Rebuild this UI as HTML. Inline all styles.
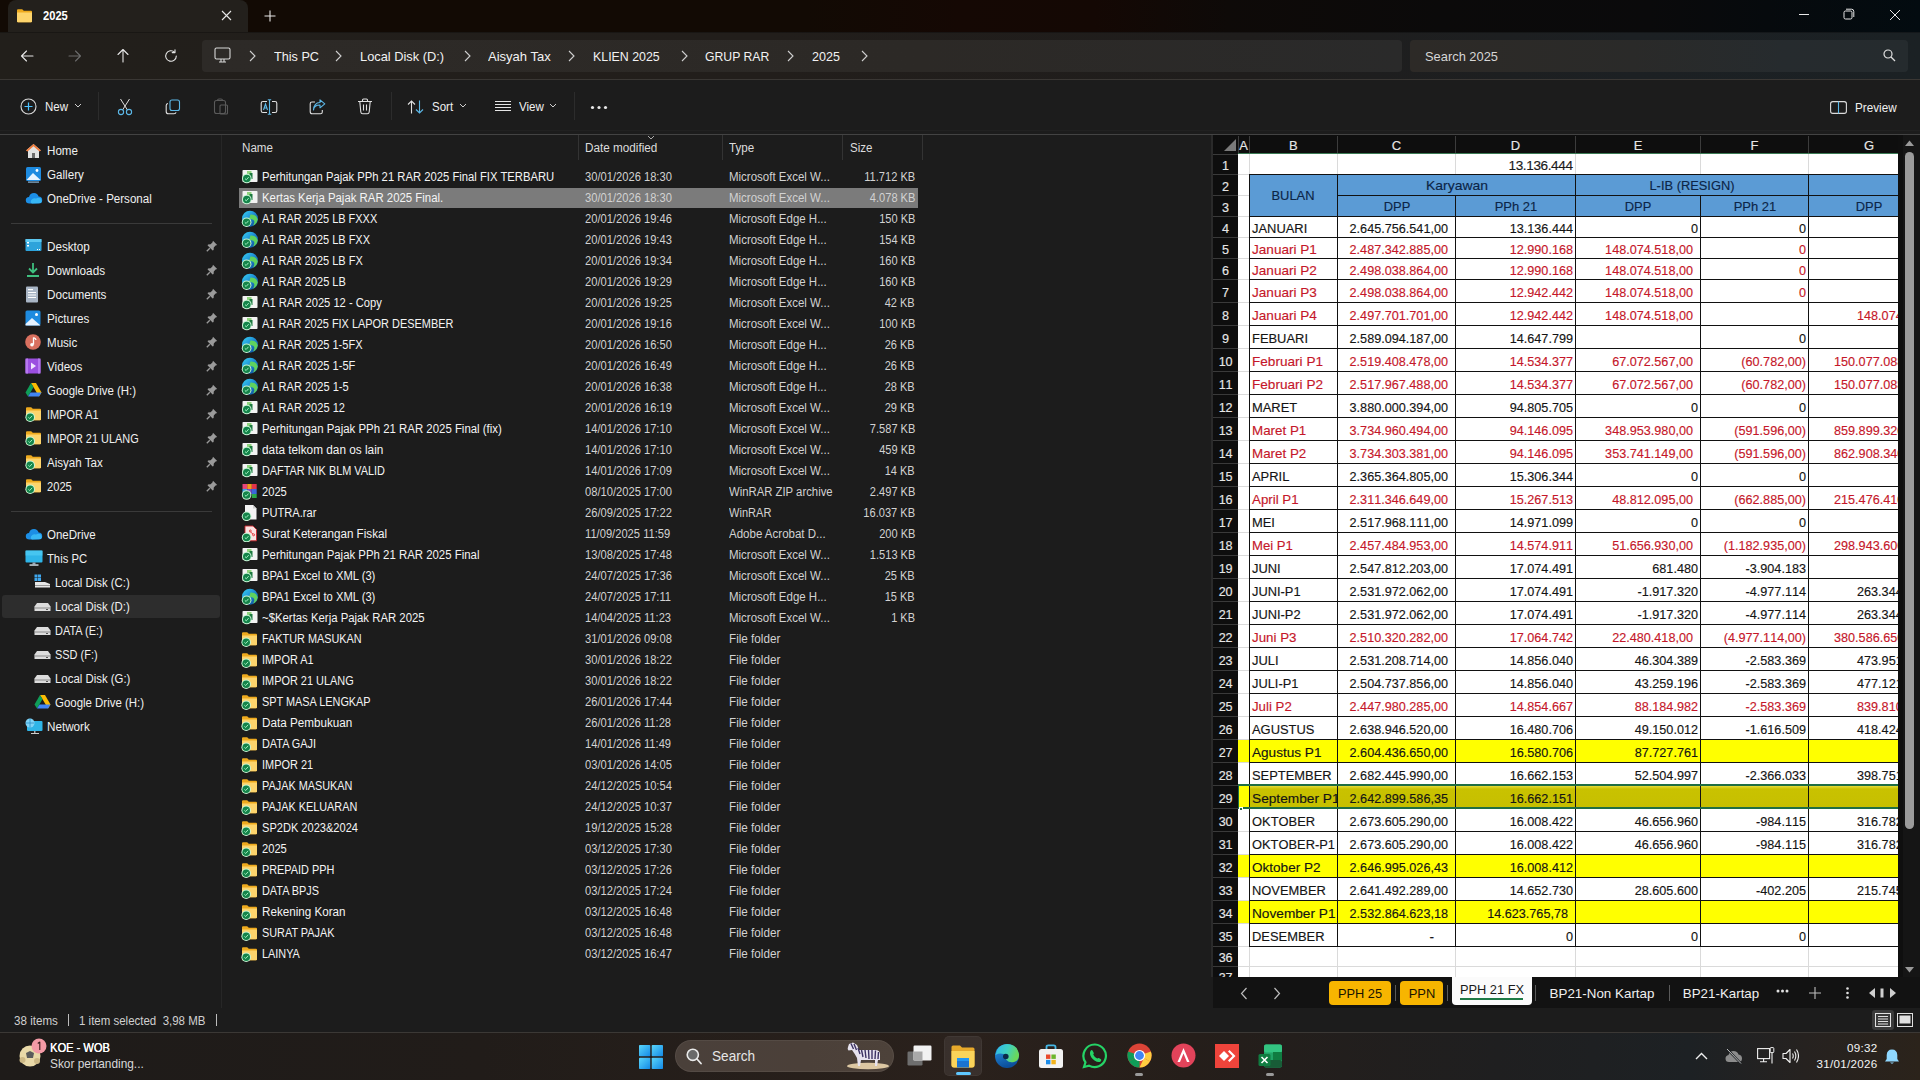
<!DOCTYPE html><html><head><meta charset="utf-8"><title>2025 - File Explorer</title><style>
*{box-sizing:border-box}
html,body{margin:0;padding:0}
body{width:1920px;height:1080px;overflow:hidden;position:relative;background:#1c1c1c;font-family:"Liberation Sans",sans-serif;color:#fff}
.a{position:absolute;white-space:nowrap}
.t12{font-size:11.6px;letter-spacing:-0.15px}
.t14{font-size:13.4px;letter-spacing:-0.2px}
.ln{position:absolute;background:#2f2f2f}
.sh .a{-webkit-text-stroke:0.15px currentColor;font-kerning:none}
</style></head><body><div class="a" style="left:0px;top:0px;width:1920px;height:32px;background:linear-gradient(90deg,#120a04 0%,#120a04 42%,#150804 50%,#140804 57%,#0e0a08 64%,#0b0a0a 75%,#0a0a0b 86%,#060a0d 92%,#030b10 100%);"></div><div class="a" style="left:8px;top:0px;width:240px;height:32px;background:#23201c;border-radius:8px 8px 0 0"></div><svg style="position:absolute;left:16px;top:8px" width="17" height="16" viewBox="0 0 17 16" ><path d="M1 2.2 Q1 1.2 2 1.2 H6.2 L7.8 2.8 H15 Q16 2.8 16 3.8 V13.2 Q16 14.2 15 14.2 H2 Q1 14.2 1 13.2 Z" fill="#eeaa1e"/><path d="M1 4.6 H16 V13.2 Q16 14.2 15 14.2 H2 Q1 14.2 1 13.2 Z" fill="#fdd46c"/></svg><div class="a" style="left:43px;top:10.34px;font-size:12px;line-height:12px;color:#ffffff;transform:scaleX(0.9300);transform-origin:left center;font-weight:bold;">2025</div><svg style="position:absolute;left:221px;top:10px" width="11" height="11" viewBox="0 0 11 11" ><path d="M1 1 L10 10 M10 1 L1 10" stroke="#e8e8e8" stroke-width="1.1"/></svg><svg style="position:absolute;left:264px;top:10px" width="12" height="12" viewBox="0 0 12 12" ><path d="M6 0.5 V11.5 M0.5 6 H11.5" stroke="#e8e8e8" stroke-width="1.1"/></svg><div class="a" style="left:1799px;top:14px;width:10px;height:1px;background:#e8e8e8;"></div><svg style="position:absolute;left:1843px;top:8px" width="12" height="12" viewBox="0 0 12 12" ><rect x="1" y="3" width="8" height="8" rx="1.5" fill="none" stroke="#e8e8e8" stroke-width="1"/><path d="M3 1.2 H8.5 Q10.8 1.2 10.8 3.5 V9" fill="none" stroke="#e8e8e8" stroke-width="1"/></svg><svg style="position:absolute;left:1889px;top:9px" width="12" height="12" viewBox="0 0 12 12" ><path d="M1 1 L11 11 M11 1 L1 11" stroke="#e8e8e8" stroke-width="1"/></svg><div class="a" style="left:0px;top:32px;width:1920px;height:47px;background:linear-gradient(90deg,#221f1b 0%,#221e1b 40%,#1f1d1c 65%,#1c2023 85%,#1b2124 100%);"></div><div class="a" style="left:0px;top:32px;width:1920px;height:1px;background:rgba(0,0,0,0.25);"></div><div class="a" style="left:0px;top:79px;width:1920px;height:1px;background:#3a3734;"></div><svg style="position:absolute;left:20px;top:49px" width="14" height="14" viewBox="0 0 14 14" ><path d="M13 7 H1.5 M6.5 2 L1.5 7 L6.5 12" fill="none" stroke="#e6e6e6" stroke-width="1.1" stroke-linecap="round" stroke-linejoin="round"/></svg><svg style="position:absolute;left:68px;top:49px" width="14" height="14" viewBox="0 0 14 14" ><path d="M1 7 H12.5 M7.5 2 L12.5 7 L7.5 12" fill="none" stroke="#6b6b6b" stroke-width="1.1" stroke-linecap="round" stroke-linejoin="round"/></svg><svg style="position:absolute;left:116px;top:48px" width="14" height="15" viewBox="0 0 14 15" ><path d="M7 14 V1.5 M2 6.5 L7 1.5 L12 6.5" fill="none" stroke="#e6e6e6" stroke-width="1.1" stroke-linecap="round" stroke-linejoin="round"/></svg><svg style="position:absolute;left:164px;top:49px" width="14" height="14" viewBox="0 0 14 14" ><path d="M12.3 7 A5.3 5.3 0 1 1 10.6 3.1" fill="none" stroke="#e6e6e6" stroke-width="1.1" stroke-linecap="round" stroke-linejoin="round"/><path d="M11 0.8 V3.6 H8.2" fill="none" stroke="#e6e6e6" stroke-width="1.1" stroke-linecap="round" stroke-linejoin="round"/></svg><div class="a" style="left:202px;top:40px;width:1200px;height:32px;background:linear-gradient(90deg,#2d2a27 0%,#2c2926 60%,#2a2a2a 100%);border-radius:4px"></div><svg style="position:absolute;left:214px;top:47px" width="17" height="16" viewBox="0 0 17 16" ><rect x="1" y="1" width="15" height="11" rx="1.5" fill="none" stroke="#d8d8d8" stroke-width="1.1"/><path d="M5 15 H12 M7 12 V14.5 M10 12 V14.5" stroke="#d8d8d8" stroke-width="1.1"/></svg><svg style="position:absolute;left:249px;top:50px" width="7" height="12" viewBox="0 0 7 12" ><path d="M1 1 L6 6 L1 11" fill="none" stroke="#d0d0d0" stroke-width="1.1"/></svg><div class="a" style="left:274px;top:49.57px;font-size:13.5px;line-height:13.5px;color:#f2f2f2;transform:scaleX(0.9375);transform-origin:left center;">This PC</div><svg style="position:absolute;left:335px;top:50px" width="7" height="12" viewBox="0 0 7 12" ><path d="M1 1 L6 6 L1 11" fill="none" stroke="#d0d0d0" stroke-width="1.1"/></svg><div class="a" style="left:360px;top:49.57px;font-size:13.5px;line-height:13.5px;color:#f2f2f2;transform:scaleX(0.9503);transform-origin:left center;">Local Disk (D:)</div><svg style="position:absolute;left:464px;top:50px" width="7" height="12" viewBox="0 0 7 12" ><path d="M1 1 L6 6 L1 11" fill="none" stroke="#d0d0d0" stroke-width="1.1"/></svg><div class="a" style="left:488px;top:49.57px;font-size:13.5px;line-height:13.5px;color:#f2f2f2;transform:scaleX(0.9647);transform-origin:left center;">Aisyah Tax</div><svg style="position:absolute;left:568px;top:50px" width="7" height="12" viewBox="0 0 7 12" ><path d="M1 1 L6 6 L1 11" fill="none" stroke="#d0d0d0" stroke-width="1.1"/></svg><div class="a" style="left:593px;top:49.57px;font-size:13.5px;line-height:13.5px;color:#f2f2f2;transform:scaleX(0.9166);transform-origin:left center;">KLIEN 2025</div><svg style="position:absolute;left:681px;top:50px" width="7" height="12" viewBox="0 0 7 12" ><path d="M1 1 L6 6 L1 11" fill="none" stroke="#d0d0d0" stroke-width="1.1"/></svg><div class="a" style="left:705px;top:49.57px;font-size:13.5px;line-height:13.5px;color:#f2f2f2;transform:scaleX(0.9063);transform-origin:left center;">GRUP RAR</div><svg style="position:absolute;left:787px;top:50px" width="7" height="12" viewBox="0 0 7 12" ><path d="M1 1 L6 6 L1 11" fill="none" stroke="#d0d0d0" stroke-width="1.1"/></svg><div class="a" style="left:812px;top:49.57px;font-size:13.5px;line-height:13.5px;color:#f2f2f2;transform:scaleX(0.9300);transform-origin:left center;">2025</div><svg style="position:absolute;left:861px;top:50px" width="7" height="12" viewBox="0 0 7 12" ><path d="M1 1 L6 6 L1 11" fill="none" stroke="#d0d0d0" stroke-width="1.1"/></svg><div class="a" style="left:1410px;top:40px;width:498px;height:32px;background:linear-gradient(90deg,#2d2a27 0%,#2a2a29 45%,#262b2e 75%,#252b2e 100%);border-radius:4px"></div><div class="a" style="left:1425px;top:49.57px;font-size:13.5px;line-height:13.5px;color:#d6d6d6;transform:scaleX(0.9535);transform-origin:left center;">Search 2025</div><svg style="position:absolute;left:1883px;top:49px" width="13" height="13" viewBox="0 0 13 13" ><circle cx="5" cy="5" r="4" fill="none" stroke="#e0e0e0" stroke-width="1.2"/><path d="M8 8 L12 12" stroke="#e0e0e0" stroke-width="1.3"/></svg><div class="a" style="left:0px;top:80px;width:1920px;height:54px;background:#1c1c1c;"></div><div class="a" style="left:0px;top:134px;width:1920px;height:1px;background:#434343;"></div><div class="a" style="left:0px;top:130px;width:1920px;height:1px;background:#212121;"></div><svg style="position:absolute;left:20px;top:98px" width="17" height="17" viewBox="0 0 17 17" ><circle cx="8.5" cy="8.5" r="7.5" fill="none" stroke="#dadada" stroke-width="1.1"/><path d="M8.5 4.5 V12.5 M4.5 8.5 H12.5" stroke="#4cc2ff" stroke-width="1.2"/></svg><div class="a" style="left:45px;top:101.34px;font-size:12px;line-height:12px;color:#f0f0f0;transform:scaleX(0.9593);transform-origin:left center;">New</div><svg style="position:absolute;left:74px;top:103px" width="8" height="5" viewBox="0 0 8 5" ><path d="M1 1 L4 4 L7 1" fill="none" stroke="#cfcfcf" stroke-width="1"/></svg><div class="a" style="left:98px;top:92px;width:1px;height:28px;background:#2c2c2c;"></div><svg style="position:absolute;left:117px;top:98px" width="16" height="18" viewBox="0 0 16 18" ><path d="M3.5 1 L10.5 12 M12.5 1 L5.5 12" stroke="#e0e0e0" stroke-width="1"/><circle cx="4" cy="14" r="2.6" fill="none" stroke="#5cb8e8" stroke-width="1.1"/><circle cx="12" cy="14" r="2.6" fill="none" stroke="#5cb8e8" stroke-width="1.1"/></svg><svg style="position:absolute;left:165px;top:99px" width="16" height="16" viewBox="0 0 16 16" ><rect x="5" y="1" width="9.5" height="10.5" rx="2" fill="none" stroke="#5cb8e8" stroke-width="1.1"/><path d="M3 4.5 Q1.2 4.8 1.2 6.5 V12.5 Q1.2 14.8 3.5 14.8 H9 Q10.8 14.8 11 13.2" fill="none" stroke="#e0e0e0" stroke-width="1.1"/></svg><svg style="position:absolute;left:213px;top:98px" width="16" height="17" viewBox="0 0 16 17" ><rect x="1.5" y="2.5" width="11" height="13" rx="2" fill="none" stroke="#5a5a5a" stroke-width="1.1"/><rect x="7" y="7" width="7.5" height="9" rx="1" fill="none" stroke="#5a5a5a" stroke-width="1.1"/><path d="M4.5 2.5 Q4.5 1 6 1 H8 Q9.5 1 9.5 2.5" fill="none" stroke="#5a5a5a" stroke-width="1.1"/></svg><svg style="position:absolute;left:260px;top:99px" width="18" height="16" viewBox="0 0 18 16" ><path d="M7 2.5 H3 Q1.2 2.5 1.2 4.3 V11.7 Q1.2 13.5 3 13.5 H7 M12 2.5 H15 Q16.8 2.5 16.8 4.3 V11.7 Q16.8 13.5 15 13.5 H12" fill="none" stroke="#e0e0e0" stroke-width="1.1"/><path d="M9.5 0.8 V15.2 M7.8 0.8 H11.2 M7.8 15.2 H11.2" stroke="#5cb8e8" stroke-width="1.1"/><path d="M3.5 11 L5.5 5 L7.5 11 M4.2 9 H6.8" fill="none" stroke="#5cb8e8" stroke-width="1.1"/></svg><svg style="position:absolute;left:309px;top:99px" width="17" height="16" viewBox="0 0 17 16" ><path d="M6 3 H3 Q1.2 3 1.2 4.8 V12.8 Q1.2 14.8 3.2 14.8 H11.5 Q13.3 14.8 13.3 13 V11" fill="none" stroke="#e0e0e0" stroke-width="1.1"/><path d="M4.5 11 Q5 6 11 6 V8.8 L15.8 4.8 L11 0.8 V3.5 Q4.8 3.8 4.5 11Z" fill="none" stroke="#5cb8e8" stroke-width="1.1" stroke-linejoin="round"/></svg><svg style="position:absolute;left:357px;top:98px" width="16" height="17" viewBox="0 0 16 17" ><path d="M1 3.5 H15 M5.5 3.5 V2 Q5.5 1 6.5 1 H9.5 Q10.5 1 10.5 2 V3.5 M2.8 3.5 L3.8 14 Q4 15.8 5.8 15.8 H10.2 Q12 15.8 12.2 14 L13.2 3.5 M6.5 6.5 V12.5 M9.5 6.5 V12.5" fill="none" stroke="#e0e0e0" stroke-width="1.1"/></svg><div class="a" style="left:391px;top:92px;width:1px;height:28px;background:#2c2c2c;"></div><svg style="position:absolute;left:407px;top:100px" width="18" height="14" viewBox="0 0 18 14" ><path d="M4.5 13.5 V1 M1 4.5 L4.5 1 L8 4.5" fill="none" stroke="#e0e0e0" stroke-width="1.1"/><path d="M12.5 0.5 V13 M9 9.5 L12.5 13 L16 9.5" fill="none" stroke="#5cb8e8" stroke-width="1.1"/></svg><div class="a" style="left:432px;top:101.34px;font-size:12px;line-height:12px;color:#f0f0f0;transform:scaleX(0.9591);transform-origin:left center;">Sort</div><svg style="position:absolute;left:459px;top:103px" width="8" height="5" viewBox="0 0 8 5" ><path d="M1 1 L4 4 L7 1" fill="none" stroke="#cfcfcf" stroke-width="1"/></svg><svg style="position:absolute;left:495px;top:101px" width="16" height="11" viewBox="0 0 16 11" ><path d="M0 0.5 H16 M0 3.5 H16 M0 6.5 H16 M0 9.5 H16" stroke="#e6e6e6" stroke-width="1"/></svg><div class="a" style="left:519px;top:101.34px;font-size:12px;line-height:12px;color:#f0f0f0;transform:scaleX(0.9638);transform-origin:left center;">View</div><svg style="position:absolute;left:549px;top:103px" width="8" height="5" viewBox="0 0 8 5" ><path d="M1 1 L4 4 L7 1" fill="none" stroke="#cfcfcf" stroke-width="1"/></svg><div class="a" style="left:574px;top:92px;width:1px;height:28px;background:#2c2c2c;"></div><svg style="position:absolute;left:590px;top:105px" width="18" height="5" viewBox="0 0 18 5" ><circle cx="2.5" cy="2.5" r="1.6" fill="#e8e8e8"/><circle cx="9" cy="2.5" r="1.6" fill="#e8e8e8"/><circle cx="15.5" cy="2.5" r="1.6" fill="#e8e8e8"/></svg><svg style="position:absolute;left:1830px;top:101px" width="17" height="13" viewBox="0 0 17 13" ><rect x="0.6" y="0.6" width="15.8" height="11.8" rx="2.2" fill="none" stroke="#dcdcdc" stroke-width="1.1"/><path d="M8.5 0.6 V12.4" stroke="#5cb8e8" stroke-width="1.1"/></svg><div class="a" style="left:1855px;top:101.84px;font-size:12px;line-height:12px;color:#f0f0f0;transform:scaleX(0.9741);transform-origin:left center;">Preview</div><div class="a" style="left:0px;top:135px;width:222px;height:873px;background:#1c1c1c;"></div><div class="a" style="left:221px;top:135px;width:1px;height:873px;background:#272727;"></div><div class="a" style="left:2px;top:595px;width:218px;height:23px;background:#2d2d2d;border-radius:3px"></div><div class="a" style="left:11px;top:223px;width:201px;height:1px;background:#3a3a3a;"></div><div class="a" style="left:11px;top:511px;width:201px;height:1px;background:#3a3a3a;"></div><svg style="position:absolute;left:25px;top:143px" width="17" height="16" viewBox="0 0 17 16" ><path d="M8.5 1 L16 7.5 H14 V15 H3 V7.5 H1 Z" fill="#e2e2e2"/><path d="M8.5 1 L16 7.5 L14.5 8.5 L8.5 3.2 L2.5 8.5 L1 7.5Z" fill="#f07b3a"/><rect x="7" y="10" width="3" height="5" fill="#6b6b6b"/></svg><div class="a" style="left:47px;top:145.44px;font-size:12px;line-height:12px;color:#f0f0f0;transform:scaleX(0.9670);transform-origin:left center;">Home</div><svg style="position:absolute;left:25px;top:166px" width="17" height="17" viewBox="0 0 17 17" ><rect x="1" y="1" width="15" height="14" rx="1.5" fill="#1e8be0"/><path d="M1.5 14 L8 7 L15.5 14Z" fill="#e8f4ff"/><circle cx="12" cy="4.5" r="1.4" fill="#fff"/><rect x="3" y="15.5" width="11" height="1.2" fill="#8ab6d8"/></svg><div class="a" style="left:47px;top:169.44px;font-size:12px;line-height:12px;color:#f0f0f0;transform:scaleX(0.9691);transform-origin:left center;">Gallery</div><svg style="position:absolute;left:25px;top:191px" width="18" height="14" viewBox="0 0 18 14" ><path d="M4.5 12.5 Q0.8 12.5 0.8 9.2 Q0.8 6.2 4 6 Q5 2 9 2 Q12.6 2 13.6 5.6 Q17.2 5.8 17.2 9.2 Q17.2 12.5 13.8 12.5Z" fill="#1c8fe6"/><path d="M7 12.5 Q5 12 6.3 9 Q8 6.5 11 7.5 Q13.6 6 15.8 7.5 Q17.5 9.5 16 12 Z" fill="#37b7f5"/></svg><div class="a" style="left:47px;top:193.44px;font-size:12px;line-height:12px;color:#f0f0f0;transform:scaleX(0.9638);transform-origin:left center;">OneDrive - Personal</div><svg style="position:absolute;left:25px;top:238px" width="17" height="14" viewBox="0 0 17 14" ><rect x="0.5" y="1" width="16" height="12" rx="1" fill="#2ea3db"/><rect x="0.5" y="1" width="16" height="3" fill="#5cc7f0"/><rect x="2" y="4" width="2" height="1.5" fill="#fff"/><rect x="2" y="7" width="2" height="1.5" fill="#fff"/><rect x="12" y="11" width="1" height="1" fill="#fff"/><rect x="14" y="11" width="1" height="1" fill="#fff"/></svg><div class="a" style="left:47px;top:241.44px;font-size:12px;line-height:12px;color:#f0f0f0;transform:scaleX(0.9733);transform-origin:left center;">Desktop</div><svg style="position:absolute;left:206px;top:240px" width="12" height="12" viewBox="0 0 12 12" ><path d="M7 0.8 L11.2 5 L9.6 5.6 L7.8 7.4 L7.6 10 L6.6 10.4 L1.6 5.4 L2 4.4 L4.6 4.2 L6.4 2.4 Z" fill="#9a9a9a"/><path d="M3.8 8.2 L0.8 11.2" stroke="#9a9a9a" stroke-width="1.3"/></svg><svg style="position:absolute;left:25px;top:262px" width="16" height="16" viewBox="0 0 16 16" ><path d="M8 1 V10 M4 6.5 L8 10.5 L12 6.5" fill="none" stroke="#3fbf7f" stroke-width="1.8"/><rect x="2" y="13" width="12" height="2" fill="#3fbf7f"/></svg><div class="a" style="left:47px;top:265.44px;font-size:12px;line-height:12px;color:#f0f0f0;transform:scaleX(0.9776);transform-origin:left center;">Downloads</div><svg style="position:absolute;left:206px;top:264px" width="12" height="12" viewBox="0 0 12 12" ><path d="M7 0.8 L11.2 5 L9.6 5.6 L7.8 7.4 L7.6 10 L6.6 10.4 L1.6 5.4 L2 4.4 L4.6 4.2 L6.4 2.4 Z" fill="#9a9a9a"/><path d="M3.8 8.2 L0.8 11.2" stroke="#9a9a9a" stroke-width="1.3"/></svg><svg style="position:absolute;left:25px;top:286px" width="14" height="17" viewBox="0 0 14 17" ><rect x="1" y="0.5" width="12" height="16" rx="1" fill="#a9b6c6"/><rect x="3" y="3" width="5" height="1.2" fill="#fff"/><rect x="3" y="6" width="8" height="1" fill="#fff"/><rect x="3" y="8.5" width="8" height="1" fill="#fff"/><rect x="3" y="11" width="8" height="1" fill="#fff"/></svg><div class="a" style="left:47px;top:289.44px;font-size:12px;line-height:12px;color:#f0f0f0;transform:scaleX(0.9779);transform-origin:left center;">Documents</div><svg style="position:absolute;left:206px;top:288px" width="12" height="12" viewBox="0 0 12 12" ><path d="M7 0.8 L11.2 5 L9.6 5.6 L7.8 7.4 L7.6 10 L6.6 10.4 L1.6 5.4 L2 4.4 L4.6 4.2 L6.4 2.4 Z" fill="#9a9a9a"/><path d="M3.8 8.2 L0.8 11.2" stroke="#9a9a9a" stroke-width="1.3"/></svg><svg style="position:absolute;left:25px;top:310px" width="16" height="16" viewBox="0 0 16 16" ><rect x="0.5" y="0.5" width="15" height="15" rx="1.5" fill="#1e8be0"/><path d="M0.5 14 L7 8 L15.5 15.5 H0.5Z" fill="#e6f2ff"/><circle cx="11.5" cy="4.5" r="1.5" fill="#fff"/></svg><div class="a" style="left:47px;top:313.44px;font-size:12px;line-height:12px;color:#f0f0f0;transform:scaleX(0.9743);transform-origin:left center;">Pictures</div><svg style="position:absolute;left:206px;top:312px" width="12" height="12" viewBox="0 0 12 12" ><path d="M7 0.8 L11.2 5 L9.6 5.6 L7.8 7.4 L7.6 10 L6.6 10.4 L1.6 5.4 L2 4.4 L4.6 4.2 L6.4 2.4 Z" fill="#9a9a9a"/><path d="M3.8 8.2 L0.8 11.2" stroke="#9a9a9a" stroke-width="1.3"/></svg><svg style="position:absolute;left:25px;top:334px" width="16" height="16" viewBox="0 0 16 16" ><circle cx="8" cy="8" r="7.8" fill="#d9705f"/><path d="M8.5 3.5 V10.5 M8.5 3.5 Q11 4.5 11 6" stroke="#fff" stroke-width="1.3" fill="none"/><circle cx="7" cy="10.8" r="1.8" fill="#fff"/></svg><div class="a" style="left:47px;top:337.44px;font-size:12px;line-height:12px;color:#f0f0f0;transform:scaleX(0.9629);transform-origin:left center;">Music</div><svg style="position:absolute;left:206px;top:336px" width="12" height="12" viewBox="0 0 12 12" ><path d="M7 0.8 L11.2 5 L9.6 5.6 L7.8 7.4 L7.6 10 L6.6 10.4 L1.6 5.4 L2 4.4 L4.6 4.2 L6.4 2.4 Z" fill="#9a9a9a"/><path d="M3.8 8.2 L0.8 11.2" stroke="#9a9a9a" stroke-width="1.3"/></svg><svg style="position:absolute;left:25px;top:358px" width="16" height="16" viewBox="0 0 16 16" ><rect x="0.5" y="0.5" width="15" height="15" rx="1.5" fill="#9b4fe0"/><rect x="0.5" y="0.5" width="2.5" height="15" fill="#b678f0"/><rect x="13" y="0.5" width="2.5" height="15" fill="#b678f0"/><path d="M6 4.5 L11 8 L6 11.5Z" fill="#f1e4ff"/></svg><div class="a" style="left:47px;top:361.44px;font-size:12px;line-height:12px;color:#f0f0f0;transform:scaleX(0.9715);transform-origin:left center;">Videos</div><svg style="position:absolute;left:206px;top:360px" width="12" height="12" viewBox="0 0 12 12" ><path d="M7 0.8 L11.2 5 L9.6 5.6 L7.8 7.4 L7.6 10 L6.6 10.4 L1.6 5.4 L2 4.4 L4.6 4.2 L6.4 2.4 Z" fill="#9a9a9a"/><path d="M3.8 8.2 L0.8 11.2" stroke="#9a9a9a" stroke-width="1.3"/></svg><svg style="position:absolute;left:25px;top:382px" width="17" height="15" viewBox="0 0 17 15" ><path d="M6 1 H11 L16.5 10.5 L14 14.5Z" fill="#fbbc04"/><path d="M6 1 L0.5 10.5 L3 14.5 L8.5 5.2Z" fill="#0f9d58"/><path d="M3 14.5 H14 L16.5 10.5 H5.5Z" fill="#4285f4"/><path d="M11 1 L16.5 10.5 H11.2 L8.5 5.5Z" fill="#ea4335" opacity="0.0"/></svg><div class="a" style="left:47px;top:385.44px;font-size:12px;line-height:12px;color:#f0f0f0;transform:scaleX(0.9542);transform-origin:left center;">Google Drive (H:)</div><svg style="position:absolute;left:206px;top:384px" width="12" height="12" viewBox="0 0 12 12" ><path d="M7 0.8 L11.2 5 L9.6 5.6 L7.8 7.4 L7.6 10 L6.6 10.4 L1.6 5.4 L2 4.4 L4.6 4.2 L6.4 2.4 Z" fill="#9a9a9a"/><path d="M3.8 8.2 L0.8 11.2" stroke="#9a9a9a" stroke-width="1.3"/></svg><svg style="position:absolute;left:25px;top:406px" width="17" height="16" viewBox="0 0 17 16" ><path d="M1 2.2 Q1 1.2 2 1.2 H6.2 L7.8 2.8 H15 Q16 2.8 16 3.8 V13.2 Q16 14.2 15 14.2 H2 Q1 14.2 1 13.2 Z" fill="#eeaa1e"/><path d="M1 4.6 H16 V13.2 Q16 14.2 15 14.2 H2 Q1 14.2 1 13.2 Z" fill="#fdd46c"/><circle cx="5.2" cy="11.2" r="4.8" fill="#c9f5d6"/><circle cx="5.2" cy="11.2" r="3.8000000000000003" fill="#14844a"/><path d="M3.4000000000000004 11.299999999999999 L4.7 12.5 L7.1 9.799999999999999" stroke="#9ff0bd" stroke-width="1" fill="none"/></svg><div class="a" style="left:47px;top:409.44px;font-size:12px;line-height:12px;color:#f0f0f0;transform:scaleX(0.9094);transform-origin:left center;">IMPOR A1</div><svg style="position:absolute;left:206px;top:408px" width="12" height="12" viewBox="0 0 12 12" ><path d="M7 0.8 L11.2 5 L9.6 5.6 L7.8 7.4 L7.6 10 L6.6 10.4 L1.6 5.4 L2 4.4 L4.6 4.2 L6.4 2.4 Z" fill="#9a9a9a"/><path d="M3.8 8.2 L0.8 11.2" stroke="#9a9a9a" stroke-width="1.3"/></svg><svg style="position:absolute;left:25px;top:430px" width="17" height="16" viewBox="0 0 17 16" ><path d="M1 2.2 Q1 1.2 2 1.2 H6.2 L7.8 2.8 H15 Q16 2.8 16 3.8 V13.2 Q16 14.2 15 14.2 H2 Q1 14.2 1 13.2 Z" fill="#eeaa1e"/><path d="M1 4.6 H16 V13.2 Q16 14.2 15 14.2 H2 Q1 14.2 1 13.2 Z" fill="#fdd46c"/><circle cx="5.2" cy="11.2" r="4.8" fill="#c9f5d6"/><circle cx="5.2" cy="11.2" r="3.8000000000000003" fill="#14844a"/><path d="M3.4000000000000004 11.299999999999999 L4.7 12.5 L7.1 9.799999999999999" stroke="#9ff0bd" stroke-width="1" fill="none"/></svg><div class="a" style="left:47px;top:433.44px;font-size:12px;line-height:12px;color:#f0f0f0;transform:scaleX(0.9100);transform-origin:left center;">IMPOR 21 ULANG</div><svg style="position:absolute;left:206px;top:432px" width="12" height="12" viewBox="0 0 12 12" ><path d="M7 0.8 L11.2 5 L9.6 5.6 L7.8 7.4 L7.6 10 L6.6 10.4 L1.6 5.4 L2 4.4 L4.6 4.2 L6.4 2.4 Z" fill="#9a9a9a"/><path d="M3.8 8.2 L0.8 11.2" stroke="#9a9a9a" stroke-width="1.3"/></svg><svg style="position:absolute;left:25px;top:454px" width="17" height="16" viewBox="0 0 17 16" ><path d="M1 2.2 Q1 1.2 2 1.2 H6.2 L7.8 2.8 H15 Q16 2.8 16 3.8 V13.2 Q16 14.2 15 14.2 H2 Q1 14.2 1 13.2 Z" fill="#eeaa1e"/><path d="M1 4.6 H16 V13.2 Q16 14.2 15 14.2 H2 Q1 14.2 1 13.2 Z" fill="#fdd46c"/><circle cx="5.2" cy="11.2" r="4.8" fill="#c9f5d6"/><circle cx="5.2" cy="11.2" r="3.8000000000000003" fill="#14844a"/><path d="M3.4000000000000004 11.299999999999999 L4.7 12.5 L7.1 9.799999999999999" stroke="#9ff0bd" stroke-width="1" fill="none"/></svg><div class="a" style="left:47px;top:457.44px;font-size:12px;line-height:12px;color:#f0f0f0;transform:scaleX(0.9647);transform-origin:left center;">Aisyah Tax</div><svg style="position:absolute;left:206px;top:456px" width="12" height="12" viewBox="0 0 12 12" ><path d="M7 0.8 L11.2 5 L9.6 5.6 L7.8 7.4 L7.6 10 L6.6 10.4 L1.6 5.4 L2 4.4 L4.6 4.2 L6.4 2.4 Z" fill="#9a9a9a"/><path d="M3.8 8.2 L0.8 11.2" stroke="#9a9a9a" stroke-width="1.3"/></svg><svg style="position:absolute;left:25px;top:478px" width="17" height="16" viewBox="0 0 17 16" ><path d="M1 2.2 Q1 1.2 2 1.2 H6.2 L7.8 2.8 H15 Q16 2.8 16 3.8 V13.2 Q16 14.2 15 14.2 H2 Q1 14.2 1 13.2 Z" fill="#eeaa1e"/><path d="M1 4.6 H16 V13.2 Q16 14.2 15 14.2 H2 Q1 14.2 1 13.2 Z" fill="#fdd46c"/><circle cx="5.2" cy="11.2" r="4.8" fill="#c9f5d6"/><circle cx="5.2" cy="11.2" r="3.8000000000000003" fill="#14844a"/><path d="M3.4000000000000004 11.299999999999999 L4.7 12.5 L7.1 9.799999999999999" stroke="#9ff0bd" stroke-width="1" fill="none"/></svg><div class="a" style="left:47px;top:481.44px;font-size:12px;line-height:12px;color:#f0f0f0;transform:scaleX(0.9300);transform-origin:left center;">2025</div><svg style="position:absolute;left:206px;top:480px" width="12" height="12" viewBox="0 0 12 12" ><path d="M7 0.8 L11.2 5 L9.6 5.6 L7.8 7.4 L7.6 10 L6.6 10.4 L1.6 5.4 L2 4.4 L4.6 4.2 L6.4 2.4 Z" fill="#9a9a9a"/><path d="M3.8 8.2 L0.8 11.2" stroke="#9a9a9a" stroke-width="1.3"/></svg><svg style="position:absolute;left:25px;top:527px" width="18" height="14" viewBox="0 0 18 14" ><path d="M4.5 12.5 Q0.8 12.5 0.8 9.2 Q0.8 6.2 4 6 Q5 2 9 2 Q12.6 2 13.6 5.6 Q17.2 5.8 17.2 9.2 Q17.2 12.5 13.8 12.5Z" fill="#1c8fe6"/><path d="M7 12.5 Q5 12 6.3 9 Q8 6.5 11 7.5 Q13.6 6 15.8 7.5 Q17.5 9.5 16 12 Z" fill="#37b7f5"/></svg><div class="a" style="left:47px;top:529.44px;font-size:12px;line-height:12px;color:#f0f0f0;transform:scaleX(0.9598);transform-origin:left center;">OneDrive</div><svg style="position:absolute;left:25px;top:550px" width="18" height="16" viewBox="0 0 18 16" ><rect x="0.5" y="0.5" width="17" height="12" rx="1" fill="#2fb5e8"/><rect x="0.5" y="0.5" width="17" height="5" fill="#56d0f5" opacity="0.6"/><rect x="7.5" y="12.5" width="3" height="2" fill="#9ab"/><rect x="4.5" y="14.3" width="9" height="1.5" fill="#c8d4dc"/></svg><div class="a" style="left:47px;top:553.44px;font-size:12px;line-height:12px;color:#f0f0f0;transform:scaleX(0.9375);transform-origin:left center;">This PC</div><svg style="position:absolute;left:34px;top:574px" width="17" height="14" viewBox="0 0 17 14" ><rect x="0.5" y="0.5" width="3" height="3" fill="#3fa7ee"/><rect x="4" y="0.5" width="3" height="3" fill="#3fa7ee"/><rect x="0.5" y="4" width="3" height="3" fill="#3fa7ee"/><rect x="4" y="4" width="3" height="3" fill="#3fa7ee"/><path d="M1 8 H11 L16 10 V13.5 H1Z" fill="#e8e8e8"/><rect x="1" y="11" width="15" height="1" fill="#999"/></svg><div class="a" style="left:55px;top:577.44px;font-size:12px;line-height:12px;color:#f0f0f0;transform:scaleX(0.9503);transform-origin:left center;">Local Disk (C:)</div><svg style="position:absolute;left:34px;top:602px" width="17" height="10" viewBox="0 0 17 10" ><path d="M3 1 H14 L16.5 4.5 V9 H0.5 V4.5Z" fill="#dcdcdc"/><rect x="0.5" y="5.5" width="16" height="1" fill="#8a8a8a"/><rect x="12" y="7" width="2" height="1" fill="#555"/></svg><div class="a" style="left:55px;top:601.44px;font-size:12px;line-height:12px;color:#f0f0f0;transform:scaleX(0.9503);transform-origin:left center;">Local Disk (D:)</div><svg style="position:absolute;left:34px;top:626px" width="17" height="10" viewBox="0 0 17 10" ><path d="M3 1 H14 L16.5 4.5 V9 H0.5 V4.5Z" fill="#dcdcdc"/><rect x="0.5" y="5.5" width="16" height="1" fill="#8a8a8a"/><rect x="12" y="7" width="2" height="1" fill="#555"/></svg><div class="a" style="left:55px;top:625.44px;font-size:12px;line-height:12px;color:#f0f0f0;transform:scaleX(0.9117);transform-origin:left center;">DATA (E:)</div><svg style="position:absolute;left:34px;top:650px" width="17" height="10" viewBox="0 0 17 10" ><path d="M3 1 H14 L16.5 4.5 V9 H0.5 V4.5Z" fill="#dcdcdc"/><rect x="0.5" y="5.5" width="16" height="1" fill="#8a8a8a"/><rect x="12" y="7" width="2" height="1" fill="#555"/></svg><div class="a" style="left:55px;top:649.44px;font-size:12px;line-height:12px;color:#f0f0f0;transform:scaleX(0.9129);transform-origin:left center;">SSD (F:)</div><svg style="position:absolute;left:34px;top:674px" width="17" height="10" viewBox="0 0 17 10" ><path d="M3 1 H14 L16.5 4.5 V9 H0.5 V4.5Z" fill="#dcdcdc"/><rect x="0.5" y="5.5" width="16" height="1" fill="#8a8a8a"/><rect x="12" y="7" width="2" height="1" fill="#555"/></svg><div class="a" style="left:55px;top:673.44px;font-size:12px;line-height:12px;color:#f0f0f0;transform:scaleX(0.9500);transform-origin:left center;">Local Disk (G:)</div><svg style="position:absolute;left:34px;top:694px" width="17" height="15" viewBox="0 0 17 15" ><path d="M6 1 H11 L16.5 10.5 L14 14.5Z" fill="#fbbc04"/><path d="M6 1 L0.5 10.5 L3 14.5 L8.5 5.2Z" fill="#0f9d58"/><path d="M3 14.5 H14 L16.5 10.5 H5.5Z" fill="#4285f4"/><path d="M11 1 L16.5 10.5 H11.2 L8.5 5.5Z" fill="#ea4335" opacity="0.0"/></svg><div class="a" style="left:55px;top:697.44px;font-size:12px;line-height:12px;color:#f0f0f0;transform:scaleX(0.9542);transform-origin:left center;">Google Drive (H:)</div><svg style="position:absolute;left:25px;top:718px" width="18" height="16" viewBox="0 0 18 16" ><rect x="2" y="3" width="15.5" height="10" rx="1" fill="#2fb5e8"/><circle cx="5" cy="5" r="4.5" fill="#7fd3f7"/><path d="M1 5 H9 M5 0.5 V9.5" stroke="#2a90c8" stroke-width="0.8"/><rect x="9" y="13" width="1.5" height="2" fill="#aaa"/><rect x="6" y="15" width="8" height="1" fill="#ccc"/></svg><div class="a" style="left:47px;top:721.44px;font-size:12px;line-height:12px;color:#f0f0f0;transform:scaleX(0.9733);transform-origin:left center;">Network</div><div class="a" style="left:223px;top:135px;width:990px;height:873px;background:#1c1c1c;"></div><div class="a" style="left:242px;top:141.84px;font-size:12px;line-height:12px;color:#dcdcdc;transform:scaleX(0.9670);transform-origin:left center;">Name</div><div class="a" style="left:585px;top:141.84px;font-size:12px;line-height:12px;color:#dcdcdc;transform:scaleX(0.9773);transform-origin:left center;">Date modified</div><div class="a" style="left:729px;top:141.84px;font-size:12px;line-height:12px;color:#dcdcdc;transform:scaleX(0.9666);transform-origin:left center;">Type</div><div class="a" style="left:850px;top:141.84px;font-size:12px;line-height:12px;color:#dcdcdc;transform:scaleX(0.9609);transform-origin:left center;">Size</div><div class="a" style="left:578px;top:135px;width:1px;height:25px;background:#333333;"></div><div class="a" style="left:722px;top:135px;width:1px;height:25px;background:#333333;"></div><div class="a" style="left:842px;top:135px;width:1px;height:25px;background:#333333;"></div><div class="a" style="left:922px;top:135px;width:1px;height:25px;background:#333333;"></div><svg style="position:absolute;left:647px;top:135px" width="8" height="5" viewBox="0 0 8 5" ><path d="M1 1 L4 4 L7 1" fill="none" stroke="#aaaaaa" stroke-width="1"/></svg><div class="a" style="left:239px;top:188px;width:679px;height:20px;background:#7b7b7b;"></div><svg style="position:absolute;left:241px;top:168px" width="17" height="17" viewBox="0 0 17 17" ><rect x="1.5" y="2" width="15" height="12" rx="0.8" fill="#f3f3f3"/><rect x="6" y="3" width="4.5" height="4" fill="#8fd47e"/><rect x="8.5" y="5" width="3" height="6" fill="#1d7a40"/><circle cx="5.8" cy="10.5" r="4.8" fill="#c9f5d6"/><circle cx="5.8" cy="10.5" r="3.8000000000000003" fill="#14844a"/><path d="M4.0 10.6 L5.3 11.8 L7.699999999999999 9.1" stroke="#9ff0bd" stroke-width="1" fill="none"/></svg><div class="a" style="left:262px;top:171.34px;font-size:12px;line-height:12px;color:#f4f4f4;transform:scaleX(0.9388);transform-origin:left center;">Perhitungan Pajak PPh 21 RAR 2025 Final FIX TERBARU</div><div class="a" style="left:585px;top:171.34px;font-size:12px;line-height:12px;color:#d2d2d2;transform:scaleX(0.9300);transform-origin:left center;">30/01/2026 18:30</div><div class="a" style="left:729px;top:171.34px;font-size:12px;line-height:12px;color:#d2d2d2;transform:scaleX(0.9571);transform-origin:left center;">Microsoft Excel W...</div><div class="a" style="right:1005px;top:171.34px;font-size:12px;line-height:12px;color:#d2d2d2;text-align:right;transform:scaleX(0.9229);transform-origin:right center;">11.712 KB</div><svg style="position:absolute;left:241px;top:189px" width="17" height="17" viewBox="0 0 17 17" ><rect x="1.5" y="2" width="15" height="12" rx="0.8" fill="#f3f3f3"/><rect x="6" y="3" width="4.5" height="4" fill="#8fd47e"/><rect x="8.5" y="5" width="3" height="6" fill="#1d7a40"/><circle cx="5.8" cy="10.5" r="4.8" fill="#c9f5d6"/><circle cx="5.8" cy="10.5" r="3.8000000000000003" fill="#14844a"/><path d="M4.0 10.6 L5.3 11.8 L7.699999999999999 9.1" stroke="#9ff0bd" stroke-width="1" fill="none"/></svg><div class="a" style="left:262px;top:192.34px;font-size:12px;line-height:12px;color:#f4f4f4;transform:scaleX(0.9501);transform-origin:left center;">Kertas Kerja Pajak RAR 2025 Final.</div><div class="a" style="left:585px;top:192.34px;font-size:12px;line-height:12px;color:#d2d2d2;transform:scaleX(0.9300);transform-origin:left center;">30/01/2026 18:30</div><div class="a" style="left:729px;top:192.34px;font-size:12px;line-height:12px;color:#d2d2d2;transform:scaleX(0.9571);transform-origin:left center;">Microsoft Excel W...</div><div class="a" style="right:1005px;top:192.34px;font-size:12px;line-height:12px;color:#d2d2d2;text-align:right;transform:scaleX(0.9219);transform-origin:right center;">4.078 KB</div><svg style="position:absolute;left:241px;top:210px" width="18" height="18" viewBox="0 0 18 18" ><defs><linearGradient id="eg" x1="0.1" y1="0.1" x2="0.9" y2="0.9"><stop offset="0" stop-color="#34c6ee"/><stop offset="0.45" stop-color="#1f8fd6"/><stop offset="1" stop-color="#0d4f9a"/></linearGradient></defs><circle cx="9" cy="8.7" r="8" fill="url(#eg)"/><path d="M9.5 4.5 Q15.5 4 16.8 9.5 Q16 14 12 15.5 Q14.5 12 12.5 10 Q10.5 8.5 8 9Z" fill="#5fd25e"/><circle cx="5.6" cy="12.2" r="4.8" fill="#c9f5d6"/><circle cx="5.6" cy="12.2" r="3.8000000000000003" fill="#14844a"/><path d="M3.8 12.299999999999999 L5.1 13.5 L7.5 10.799999999999999" stroke="#9ff0bd" stroke-width="1" fill="none"/></svg><div class="a" style="left:262px;top:213.34px;font-size:12px;line-height:12px;color:#f4f4f4;transform:scaleX(0.9143);transform-origin:left center;">A1 RAR 2025 LB FXXX</div><div class="a" style="left:585px;top:213.34px;font-size:12px;line-height:12px;color:#d2d2d2;transform:scaleX(0.9300);transform-origin:left center;">20/01/2026 19:46</div><div class="a" style="left:729px;top:213.34px;font-size:12px;line-height:12px;color:#d2d2d2;transform:scaleX(0.9580);transform-origin:left center;">Microsoft Edge H...</div><div class="a" style="right:1005px;top:213.34px;font-size:12px;line-height:12px;color:#d2d2d2;text-align:right;transform:scaleX(0.9198);transform-origin:right center;">150 KB</div><svg style="position:absolute;left:241px;top:231px" width="18" height="18" viewBox="0 0 18 18" ><defs><linearGradient id="eg" x1="0.1" y1="0.1" x2="0.9" y2="0.9"><stop offset="0" stop-color="#34c6ee"/><stop offset="0.45" stop-color="#1f8fd6"/><stop offset="1" stop-color="#0d4f9a"/></linearGradient></defs><circle cx="9" cy="8.7" r="8" fill="url(#eg)"/><path d="M9.5 4.5 Q15.5 4 16.8 9.5 Q16 14 12 15.5 Q14.5 12 12.5 10 Q10.5 8.5 8 9Z" fill="#5fd25e"/><circle cx="5.6" cy="12.2" r="4.8" fill="#c9f5d6"/><circle cx="5.6" cy="12.2" r="3.8000000000000003" fill="#14844a"/><path d="M3.8 12.299999999999999 L5.1 13.5 L7.5 10.799999999999999" stroke="#9ff0bd" stroke-width="1" fill="none"/></svg><div class="a" style="left:262px;top:234.34px;font-size:12px;line-height:12px;color:#f4f4f4;transform:scaleX(0.9149);transform-origin:left center;">A1 RAR 2025 LB FXX</div><div class="a" style="left:585px;top:234.34px;font-size:12px;line-height:12px;color:#d2d2d2;transform:scaleX(0.9300);transform-origin:left center;">20/01/2026 19:43</div><div class="a" style="left:729px;top:234.34px;font-size:12px;line-height:12px;color:#d2d2d2;transform:scaleX(0.9580);transform-origin:left center;">Microsoft Edge H...</div><div class="a" style="right:1005px;top:234.34px;font-size:12px;line-height:12px;color:#d2d2d2;text-align:right;transform:scaleX(0.9198);transform-origin:right center;">154 KB</div><svg style="position:absolute;left:241px;top:252px" width="18" height="18" viewBox="0 0 18 18" ><defs><linearGradient id="eg" x1="0.1" y1="0.1" x2="0.9" y2="0.9"><stop offset="0" stop-color="#34c6ee"/><stop offset="0.45" stop-color="#1f8fd6"/><stop offset="1" stop-color="#0d4f9a"/></linearGradient></defs><circle cx="9" cy="8.7" r="8" fill="url(#eg)"/><path d="M9.5 4.5 Q15.5 4 16.8 9.5 Q16 14 12 15.5 Q14.5 12 12.5 10 Q10.5 8.5 8 9Z" fill="#5fd25e"/><circle cx="5.6" cy="12.2" r="4.8" fill="#c9f5d6"/><circle cx="5.6" cy="12.2" r="3.8000000000000003" fill="#14844a"/><path d="M3.8 12.299999999999999 L5.1 13.5 L7.5 10.799999999999999" stroke="#9ff0bd" stroke-width="1" fill="none"/></svg><div class="a" style="left:262px;top:255.34px;font-size:12px;line-height:12px;color:#f4f4f4;transform:scaleX(0.9156);transform-origin:left center;">A1 RAR 2025 LB FX</div><div class="a" style="left:585px;top:255.34px;font-size:12px;line-height:12px;color:#d2d2d2;transform:scaleX(0.9300);transform-origin:left center;">20/01/2026 19:34</div><div class="a" style="left:729px;top:255.34px;font-size:12px;line-height:12px;color:#d2d2d2;transform:scaleX(0.9580);transform-origin:left center;">Microsoft Edge H...</div><div class="a" style="right:1005px;top:255.34px;font-size:12px;line-height:12px;color:#d2d2d2;text-align:right;transform:scaleX(0.9198);transform-origin:right center;">160 KB</div><svg style="position:absolute;left:241px;top:273px" width="18" height="18" viewBox="0 0 18 18" ><defs><linearGradient id="eg" x1="0.1" y1="0.1" x2="0.9" y2="0.9"><stop offset="0" stop-color="#34c6ee"/><stop offset="0.45" stop-color="#1f8fd6"/><stop offset="1" stop-color="#0d4f9a"/></linearGradient></defs><circle cx="9" cy="8.7" r="8" fill="url(#eg)"/><path d="M9.5 4.5 Q15.5 4 16.8 9.5 Q16 14 12 15.5 Q14.5 12 12.5 10 Q10.5 8.5 8 9Z" fill="#5fd25e"/><circle cx="5.6" cy="12.2" r="4.8" fill="#c9f5d6"/><circle cx="5.6" cy="12.2" r="3.8000000000000003" fill="#14844a"/><path d="M3.8 12.299999999999999 L5.1 13.5 L7.5 10.799999999999999" stroke="#9ff0bd" stroke-width="1" fill="none"/></svg><div class="a" style="left:262px;top:276.34px;font-size:12px;line-height:12px;color:#f4f4f4;transform:scaleX(0.9169);transform-origin:left center;">A1 RAR 2025 LB</div><div class="a" style="left:585px;top:276.34px;font-size:12px;line-height:12px;color:#d2d2d2;transform:scaleX(0.9300);transform-origin:left center;">20/01/2026 19:29</div><div class="a" style="left:729px;top:276.34px;font-size:12px;line-height:12px;color:#d2d2d2;transform:scaleX(0.9580);transform-origin:left center;">Microsoft Edge H...</div><div class="a" style="right:1005px;top:276.34px;font-size:12px;line-height:12px;color:#d2d2d2;text-align:right;transform:scaleX(0.9198);transform-origin:right center;">160 KB</div><svg style="position:absolute;left:241px;top:294px" width="17" height="17" viewBox="0 0 17 17" ><rect x="1.5" y="2" width="15" height="12" rx="0.8" fill="#f3f3f3"/><rect x="6" y="3" width="4.5" height="4" fill="#8fd47e"/><rect x="8.5" y="5" width="3" height="6" fill="#1d7a40"/><circle cx="5.8" cy="10.5" r="4.8" fill="#c9f5d6"/><circle cx="5.8" cy="10.5" r="3.8000000000000003" fill="#14844a"/><path d="M4.0 10.6 L5.3 11.8 L7.699999999999999 9.1" stroke="#9ff0bd" stroke-width="1" fill="none"/></svg><div class="a" style="left:262px;top:297.34px;font-size:12px;line-height:12px;color:#f4f4f4;transform:scaleX(0.9309);transform-origin:left center;">A1 RAR 2025 12 - Copy</div><div class="a" style="left:585px;top:297.34px;font-size:12px;line-height:12px;color:#d2d2d2;transform:scaleX(0.9300);transform-origin:left center;">20/01/2026 19:25</div><div class="a" style="left:729px;top:297.34px;font-size:12px;line-height:12px;color:#d2d2d2;transform:scaleX(0.9571);transform-origin:left center;">Microsoft Excel W...</div><div class="a" style="right:1005px;top:297.34px;font-size:12px;line-height:12px;color:#d2d2d2;text-align:right;transform:scaleX(0.9178);transform-origin:right center;">42 KB</div><svg style="position:absolute;left:241px;top:315px" width="17" height="17" viewBox="0 0 17 17" ><rect x="1.5" y="2" width="15" height="12" rx="0.8" fill="#f3f3f3"/><rect x="6" y="3" width="4.5" height="4" fill="#8fd47e"/><rect x="8.5" y="5" width="3" height="6" fill="#1d7a40"/><circle cx="5.8" cy="10.5" r="4.8" fill="#c9f5d6"/><circle cx="5.8" cy="10.5" r="3.8000000000000003" fill="#14844a"/><path d="M4.0 10.6 L5.3 11.8 L7.699999999999999 9.1" stroke="#9ff0bd" stroke-width="1" fill="none"/></svg><div class="a" style="left:262px;top:318.34px;font-size:12px;line-height:12px;color:#f4f4f4;transform:scaleX(0.9110);transform-origin:left center;">A1 RAR 2025 FIX LAPOR DESEMBER</div><div class="a" style="left:585px;top:318.34px;font-size:12px;line-height:12px;color:#d2d2d2;transform:scaleX(0.9300);transform-origin:left center;">20/01/2026 19:16</div><div class="a" style="left:729px;top:318.34px;font-size:12px;line-height:12px;color:#d2d2d2;transform:scaleX(0.9571);transform-origin:left center;">Microsoft Excel W...</div><div class="a" style="right:1005px;top:318.34px;font-size:12px;line-height:12px;color:#d2d2d2;text-align:right;transform:scaleX(0.9198);transform-origin:right center;">100 KB</div><svg style="position:absolute;left:241px;top:336px" width="18" height="18" viewBox="0 0 18 18" ><defs><linearGradient id="eg" x1="0.1" y1="0.1" x2="0.9" y2="0.9"><stop offset="0" stop-color="#34c6ee"/><stop offset="0.45" stop-color="#1f8fd6"/><stop offset="1" stop-color="#0d4f9a"/></linearGradient></defs><circle cx="9" cy="8.7" r="8" fill="url(#eg)"/><path d="M9.5 4.5 Q15.5 4 16.8 9.5 Q16 14 12 15.5 Q14.5 12 12.5 10 Q10.5 8.5 8 9Z" fill="#5fd25e"/><circle cx="5.6" cy="12.2" r="4.8" fill="#c9f5d6"/><circle cx="5.6" cy="12.2" r="3.8000000000000003" fill="#14844a"/><path d="M3.8 12.299999999999999 L5.1 13.5 L7.5 10.799999999999999" stroke="#9ff0bd" stroke-width="1" fill="none"/></svg><div class="a" style="left:262px;top:339.34px;font-size:12px;line-height:12px;color:#f4f4f4;transform:scaleX(0.9189);transform-origin:left center;">A1 RAR 2025 1-5FX</div><div class="a" style="left:585px;top:339.34px;font-size:12px;line-height:12px;color:#d2d2d2;transform:scaleX(0.9300);transform-origin:left center;">20/01/2026 16:50</div><div class="a" style="left:729px;top:339.34px;font-size:12px;line-height:12px;color:#d2d2d2;transform:scaleX(0.9580);transform-origin:left center;">Microsoft Edge H...</div><div class="a" style="right:1005px;top:339.34px;font-size:12px;line-height:12px;color:#d2d2d2;text-align:right;transform:scaleX(0.9178);transform-origin:right center;">26 KB</div><svg style="position:absolute;left:241px;top:357px" width="18" height="18" viewBox="0 0 18 18" ><defs><linearGradient id="eg" x1="0.1" y1="0.1" x2="0.9" y2="0.9"><stop offset="0" stop-color="#34c6ee"/><stop offset="0.45" stop-color="#1f8fd6"/><stop offset="1" stop-color="#0d4f9a"/></linearGradient></defs><circle cx="9" cy="8.7" r="8" fill="url(#eg)"/><path d="M9.5 4.5 Q15.5 4 16.8 9.5 Q16 14 12 15.5 Q14.5 12 12.5 10 Q10.5 8.5 8 9Z" fill="#5fd25e"/><circle cx="5.6" cy="12.2" r="4.8" fill="#c9f5d6"/><circle cx="5.6" cy="12.2" r="3.8000000000000003" fill="#14844a"/><path d="M3.8 12.299999999999999 L5.1 13.5 L7.5 10.799999999999999" stroke="#9ff0bd" stroke-width="1" fill="none"/></svg><div class="a" style="left:262px;top:360.34px;font-size:12px;line-height:12px;color:#f4f4f4;transform:scaleX(0.9200);transform-origin:left center;">A1 RAR 2025 1-5F</div><div class="a" style="left:585px;top:360.34px;font-size:12px;line-height:12px;color:#d2d2d2;transform:scaleX(0.9300);transform-origin:left center;">20/01/2026 16:49</div><div class="a" style="left:729px;top:360.34px;font-size:12px;line-height:12px;color:#d2d2d2;transform:scaleX(0.9580);transform-origin:left center;">Microsoft Edge H...</div><div class="a" style="right:1005px;top:360.34px;font-size:12px;line-height:12px;color:#d2d2d2;text-align:right;transform:scaleX(0.9178);transform-origin:right center;">26 KB</div><svg style="position:absolute;left:241px;top:378px" width="18" height="18" viewBox="0 0 18 18" ><defs><linearGradient id="eg" x1="0.1" y1="0.1" x2="0.9" y2="0.9"><stop offset="0" stop-color="#34c6ee"/><stop offset="0.45" stop-color="#1f8fd6"/><stop offset="1" stop-color="#0d4f9a"/></linearGradient></defs><circle cx="9" cy="8.7" r="8" fill="url(#eg)"/><path d="M9.5 4.5 Q15.5 4 16.8 9.5 Q16 14 12 15.5 Q14.5 12 12.5 10 Q10.5 8.5 8 9Z" fill="#5fd25e"/><circle cx="5.6" cy="12.2" r="4.8" fill="#c9f5d6"/><circle cx="5.6" cy="12.2" r="3.8000000000000003" fill="#14844a"/><path d="M3.8 12.299999999999999 L5.1 13.5 L7.5 10.799999999999999" stroke="#9ff0bd" stroke-width="1" fill="none"/></svg><div class="a" style="left:262px;top:381.34px;font-size:12px;line-height:12px;color:#f4f4f4;transform:scaleX(0.9211);transform-origin:left center;">A1 RAR 2025 1-5</div><div class="a" style="left:585px;top:381.34px;font-size:12px;line-height:12px;color:#d2d2d2;transform:scaleX(0.9300);transform-origin:left center;">20/01/2026 16:38</div><div class="a" style="left:729px;top:381.34px;font-size:12px;line-height:12px;color:#d2d2d2;transform:scaleX(0.9580);transform-origin:left center;">Microsoft Edge H...</div><div class="a" style="right:1005px;top:381.34px;font-size:12px;line-height:12px;color:#d2d2d2;text-align:right;transform:scaleX(0.9178);transform-origin:right center;">28 KB</div><svg style="position:absolute;left:241px;top:399px" width="17" height="17" viewBox="0 0 17 17" ><rect x="1.5" y="2" width="15" height="12" rx="0.8" fill="#f3f3f3"/><rect x="6" y="3" width="4.5" height="4" fill="#8fd47e"/><rect x="8.5" y="5" width="3" height="6" fill="#1d7a40"/><circle cx="5.8" cy="10.5" r="4.8" fill="#c9f5d6"/><circle cx="5.8" cy="10.5" r="3.8000000000000003" fill="#14844a"/><path d="M4.0 10.6 L5.3 11.8 L7.699999999999999 9.1" stroke="#9ff0bd" stroke-width="1" fill="none"/></svg><div class="a" style="left:262px;top:402.34px;font-size:12px;line-height:12px;color:#f4f4f4;transform:scaleX(0.9207);transform-origin:left center;">A1 RAR 2025 12</div><div class="a" style="left:585px;top:402.34px;font-size:12px;line-height:12px;color:#d2d2d2;transform:scaleX(0.9300);transform-origin:left center;">20/01/2026 16:19</div><div class="a" style="left:729px;top:402.34px;font-size:12px;line-height:12px;color:#d2d2d2;transform:scaleX(0.9571);transform-origin:left center;">Microsoft Excel W...</div><div class="a" style="right:1005px;top:402.34px;font-size:12px;line-height:12px;color:#d2d2d2;text-align:right;transform:scaleX(0.9178);transform-origin:right center;">29 KB</div><svg style="position:absolute;left:241px;top:420px" width="17" height="17" viewBox="0 0 17 17" ><rect x="1.5" y="2" width="15" height="12" rx="0.8" fill="#f3f3f3"/><rect x="6" y="3" width="4.5" height="4" fill="#8fd47e"/><rect x="8.5" y="5" width="3" height="6" fill="#1d7a40"/><circle cx="5.8" cy="10.5" r="4.8" fill="#c9f5d6"/><circle cx="5.8" cy="10.5" r="3.8000000000000003" fill="#14844a"/><path d="M4.0 10.6 L5.3 11.8 L7.699999999999999 9.1" stroke="#9ff0bd" stroke-width="1" fill="none"/></svg><div class="a" style="left:262px;top:423.34px;font-size:12px;line-height:12px;color:#f4f4f4;transform:scaleX(0.9512);transform-origin:left center;">Perhitungan Pajak PPh 21 RAR 2025 Final (fix)</div><div class="a" style="left:585px;top:423.34px;font-size:12px;line-height:12px;color:#d2d2d2;transform:scaleX(0.9300);transform-origin:left center;">14/01/2026 17:10</div><div class="a" style="left:729px;top:423.34px;font-size:12px;line-height:12px;color:#d2d2d2;transform:scaleX(0.9571);transform-origin:left center;">Microsoft Excel W...</div><div class="a" style="right:1005px;top:423.34px;font-size:12px;line-height:12px;color:#d2d2d2;text-align:right;transform:scaleX(0.9219);transform-origin:right center;">7.587 KB</div><svg style="position:absolute;left:241px;top:441px" width="17" height="17" viewBox="0 0 17 17" ><rect x="1.5" y="2" width="15" height="12" rx="0.8" fill="#f3f3f3"/><rect x="6" y="3" width="4.5" height="4" fill="#8fd47e"/><rect x="8.5" y="5" width="3" height="6" fill="#1d7a40"/><circle cx="5.8" cy="10.5" r="4.8" fill="#c9f5d6"/><circle cx="5.8" cy="10.5" r="3.8000000000000003" fill="#14844a"/><path d="M4.0 10.6 L5.3 11.8 L7.699999999999999 9.1" stroke="#9ff0bd" stroke-width="1" fill="none"/></svg><div class="a" style="left:262px;top:444.34px;font-size:12px;line-height:12px;color:#f4f4f4;transform:scaleX(0.9835);transform-origin:left center;">data telkom dan os lain</div><div class="a" style="left:585px;top:444.34px;font-size:12px;line-height:12px;color:#d2d2d2;transform:scaleX(0.9300);transform-origin:left center;">14/01/2026 17:10</div><div class="a" style="left:729px;top:444.34px;font-size:12px;line-height:12px;color:#d2d2d2;transform:scaleX(0.9571);transform-origin:left center;">Microsoft Excel W...</div><div class="a" style="right:1005px;top:444.34px;font-size:12px;line-height:12px;color:#d2d2d2;text-align:right;transform:scaleX(0.9198);transform-origin:right center;">459 KB</div><svg style="position:absolute;left:241px;top:462px" width="17" height="17" viewBox="0 0 17 17" ><rect x="1.5" y="2" width="15" height="12" rx="0.8" fill="#f3f3f3"/><rect x="6" y="3" width="4.5" height="4" fill="#8fd47e"/><rect x="8.5" y="5" width="3" height="6" fill="#1d7a40"/><circle cx="5.8" cy="10.5" r="4.8" fill="#c9f5d6"/><circle cx="5.8" cy="10.5" r="3.8000000000000003" fill="#14844a"/><path d="M4.0 10.6 L5.3 11.8 L7.699999999999999 9.1" stroke="#9ff0bd" stroke-width="1" fill="none"/></svg><div class="a" style="left:262px;top:465.34px;font-size:12px;line-height:12px;color:#f4f4f4;transform:scaleX(0.9068);transform-origin:left center;">DAFTAR NIK BLM VALID</div><div class="a" style="left:585px;top:465.34px;font-size:12px;line-height:12px;color:#d2d2d2;transform:scaleX(0.9300);transform-origin:left center;">14/01/2026 17:09</div><div class="a" style="left:729px;top:465.34px;font-size:12px;line-height:12px;color:#d2d2d2;transform:scaleX(0.9571);transform-origin:left center;">Microsoft Excel W...</div><div class="a" style="right:1005px;top:465.34px;font-size:12px;line-height:12px;color:#d2d2d2;text-align:right;transform:scaleX(0.9178);transform-origin:right center;">14 KB</div><svg style="position:absolute;left:241px;top:483px" width="17" height="17" viewBox="0 0 17 17" ><rect x="1.5" y="1" width="4.6" height="5" fill="#e8457a"/><rect x="6.2" y="1" width="4.6" height="5" fill="#f39a1e"/><rect x="10.9" y="1" width="4.8" height="5" fill="#e2334b"/><rect x="1.5" y="6" width="4.6" height="5" fill="#39a6e0"/><rect x="6.2" y="6" width="4.6" height="5" fill="#7a4fc8"/><rect x="10.9" y="6" width="4.8" height="5" fill="#3a68d8"/><rect x="10.9" y="11" width="4.8" height="4" fill="#2aa84a"/><circle cx="5.6" cy="12" r="4.8" fill="#c9f5d6"/><circle cx="5.6" cy="12" r="3.8000000000000003" fill="#14844a"/><path d="M3.8 12.1 L5.1 13.3 L7.5 10.6" stroke="#9ff0bd" stroke-width="1" fill="none"/></svg><div class="a" style="left:262px;top:486.34px;font-size:12px;line-height:12px;color:#f4f4f4;transform:scaleX(0.9300);transform-origin:left center;">2025</div><div class="a" style="left:585px;top:486.34px;font-size:12px;line-height:12px;color:#d2d2d2;transform:scaleX(0.9300);transform-origin:left center;">08/10/2025 17:00</div><div class="a" style="left:729px;top:486.34px;font-size:12px;line-height:12px;color:#d2d2d2;transform:scaleX(0.9436);transform-origin:left center;">WinRAR ZIP archive</div><div class="a" style="right:1005px;top:486.34px;font-size:12px;line-height:12px;color:#d2d2d2;text-align:right;transform:scaleX(0.9219);transform-origin:right center;">2.497 KB</div><svg style="position:absolute;left:241px;top:504px" width="17" height="17" viewBox="0 0 17 17" ><path d="M4 1 H12 L15.5 4.5 V15.5 H4Z" fill="#f4f4f4"/><path d="M12 1 V4.5 H15.5" fill="#cfcfcf"/><circle cx="5.6" cy="12.3" r="4.8" fill="#c9f5d6"/><circle cx="5.6" cy="12.3" r="3.8000000000000003" fill="#14844a"/><path d="M3.8 12.4 L5.1 13.600000000000001 L7.5 10.9" stroke="#9ff0bd" stroke-width="1" fill="none"/></svg><div class="a" style="left:262px;top:507.34px;font-size:12px;line-height:12px;color:#f4f4f4;transform:scaleX(0.9277);transform-origin:left center;">PUTRA.rar</div><div class="a" style="left:585px;top:507.34px;font-size:12px;line-height:12px;color:#d2d2d2;transform:scaleX(0.9300);transform-origin:left center;">26/09/2025 17:22</div><div class="a" style="left:729px;top:507.34px;font-size:12px;line-height:12px;color:#d2d2d2;transform:scaleX(0.9223);transform-origin:left center;">WinRAR</div><div class="a" style="right:1005px;top:507.34px;font-size:12px;line-height:12px;color:#d2d2d2;text-align:right;transform:scaleX(0.9229);transform-origin:right center;">16.037 KB</div><svg style="position:absolute;left:241px;top:525px" width="17" height="17" viewBox="0 0 17 17" ><path d="M4 1 H12 L15.5 4.5 V15.8 H4Z" fill="#fbe3e3" stroke="#c8252a" stroke-width="0.9"/><circle cx="9.3" cy="6" r="1" fill="none" stroke="#d22" stroke-width="0.8"/><circle cx="12.6" cy="9.8" r="1" fill="none" stroke="#d22" stroke-width="0.8"/><path d="M9.6 7 L12 9" stroke="#d22" stroke-width="0.8"/><circle cx="5.6" cy="12.5" r="4.8" fill="#c9f5d6"/><circle cx="5.6" cy="12.5" r="3.8000000000000003" fill="#14844a"/><path d="M3.8 12.6 L5.1 13.8 L7.5 11.1" stroke="#9ff0bd" stroke-width="1" fill="none"/></svg><div class="a" style="left:262px;top:528.34px;font-size:12px;line-height:12px;color:#f4f4f4;transform:scaleX(0.9715);transform-origin:left center;">Surat Keterangan Fiskal</div><div class="a" style="left:585px;top:528.34px;font-size:12px;line-height:12px;color:#d2d2d2;transform:scaleX(0.9300);transform-origin:left center;">11/09/2025 11:59</div><div class="a" style="left:729px;top:528.34px;font-size:12px;line-height:12px;color:#d2d2d2;transform:scaleX(0.9595);transform-origin:left center;">Adobe Acrobat D...</div><div class="a" style="right:1005px;top:528.34px;font-size:12px;line-height:12px;color:#d2d2d2;text-align:right;transform:scaleX(0.9198);transform-origin:right center;">200 KB</div><svg style="position:absolute;left:241px;top:546px" width="17" height="17" viewBox="0 0 17 17" ><rect x="1.5" y="2" width="15" height="12" rx="0.8" fill="#f3f3f3"/><rect x="6" y="3" width="4.5" height="4" fill="#8fd47e"/><rect x="8.5" y="5" width="3" height="6" fill="#1d7a40"/><circle cx="5.8" cy="10.5" r="4.8" fill="#c9f5d6"/><circle cx="5.8" cy="10.5" r="3.8000000000000003" fill="#14844a"/><path d="M4.0 10.6 L5.3 11.8 L7.699999999999999 9.1" stroke="#9ff0bd" stroke-width="1" fill="none"/></svg><div class="a" style="left:262px;top:549.34px;font-size:12px;line-height:12px;color:#f4f4f4;transform:scaleX(0.9502);transform-origin:left center;">Perhitungan Pajak PPh 21 RAR 2025 Final</div><div class="a" style="left:585px;top:549.34px;font-size:12px;line-height:12px;color:#d2d2d2;transform:scaleX(0.9300);transform-origin:left center;">13/08/2025 17:48</div><div class="a" style="left:729px;top:549.34px;font-size:12px;line-height:12px;color:#d2d2d2;transform:scaleX(0.9571);transform-origin:left center;">Microsoft Excel W...</div><div class="a" style="right:1005px;top:549.34px;font-size:12px;line-height:12px;color:#d2d2d2;text-align:right;transform:scaleX(0.9219);transform-origin:right center;">1.513 KB</div><svg style="position:absolute;left:241px;top:567px" width="17" height="17" viewBox="0 0 17 17" ><rect x="1.5" y="2" width="15" height="12" rx="0.8" fill="#f3f3f3"/><rect x="6" y="3" width="4.5" height="4" fill="#8fd47e"/><rect x="8.5" y="5" width="3" height="6" fill="#1d7a40"/><circle cx="5.8" cy="10.5" r="4.8" fill="#c9f5d6"/><circle cx="5.8" cy="10.5" r="3.8000000000000003" fill="#14844a"/><path d="M4.0 10.6 L5.3 11.8 L7.699999999999999 9.1" stroke="#9ff0bd" stroke-width="1" fill="none"/></svg><div class="a" style="left:262px;top:570.34px;font-size:12px;line-height:12px;color:#f4f4f4;transform:scaleX(0.9338);transform-origin:left center;">BPA1 Excel to XML (3)</div><div class="a" style="left:585px;top:570.34px;font-size:12px;line-height:12px;color:#d2d2d2;transform:scaleX(0.9300);transform-origin:left center;">24/07/2025 17:36</div><div class="a" style="left:729px;top:570.34px;font-size:12px;line-height:12px;color:#d2d2d2;transform:scaleX(0.9571);transform-origin:left center;">Microsoft Excel W...</div><div class="a" style="right:1005px;top:570.34px;font-size:12px;line-height:12px;color:#d2d2d2;text-align:right;transform:scaleX(0.9178);transform-origin:right center;">25 KB</div><svg style="position:absolute;left:241px;top:588px" width="18" height="18" viewBox="0 0 18 18" ><defs><linearGradient id="eg" x1="0.1" y1="0.1" x2="0.9" y2="0.9"><stop offset="0" stop-color="#34c6ee"/><stop offset="0.45" stop-color="#1f8fd6"/><stop offset="1" stop-color="#0d4f9a"/></linearGradient></defs><circle cx="9" cy="8.7" r="8" fill="url(#eg)"/><path d="M9.5 4.5 Q15.5 4 16.8 9.5 Q16 14 12 15.5 Q14.5 12 12.5 10 Q10.5 8.5 8 9Z" fill="#5fd25e"/><circle cx="5.6" cy="12.2" r="4.8" fill="#c9f5d6"/><circle cx="5.6" cy="12.2" r="3.8000000000000003" fill="#14844a"/><path d="M3.8 12.299999999999999 L5.1 13.5 L7.5 10.799999999999999" stroke="#9ff0bd" stroke-width="1" fill="none"/></svg><div class="a" style="left:262px;top:591.34px;font-size:12px;line-height:12px;color:#f4f4f4;transform:scaleX(0.9338);transform-origin:left center;">BPA1 Excel to XML (3)</div><div class="a" style="left:585px;top:591.34px;font-size:12px;line-height:12px;color:#d2d2d2;transform:scaleX(0.9300);transform-origin:left center;">24/07/2025 17:11</div><div class="a" style="left:729px;top:591.34px;font-size:12px;line-height:12px;color:#d2d2d2;transform:scaleX(0.9580);transform-origin:left center;">Microsoft Edge H...</div><div class="a" style="right:1005px;top:591.34px;font-size:12px;line-height:12px;color:#d2d2d2;text-align:right;transform:scaleX(0.9178);transform-origin:right center;">15 KB</div><svg style="position:absolute;left:241px;top:609px" width="17" height="17" viewBox="0 0 17 17" ><rect x="1.5" y="2" width="15" height="12" rx="0.8" fill="#f3f3f3"/><rect x="6" y="3" width="4.5" height="4" fill="#8fd47e"/><rect x="8.5" y="5" width="3" height="6" fill="#1d7a40"/><circle cx="5.8" cy="10.5" r="4.8" fill="#c9f5d6"/><circle cx="5.8" cy="10.5" r="3.8000000000000003" fill="#14844a"/><path d="M4.0 10.6 L5.3 11.8 L7.699999999999999 9.1" stroke="#9ff0bd" stroke-width="1" fill="none"/></svg><div class="a" style="left:262px;top:612.34px;font-size:12px;line-height:12px;color:#f4f4f4;transform:scaleX(0.9468);transform-origin:left center;">~$Kertas Kerja Pajak RAR 2025</div><div class="a" style="left:585px;top:612.34px;font-size:12px;line-height:12px;color:#d2d2d2;transform:scaleX(0.9300);transform-origin:left center;">14/04/2025 11:23</div><div class="a" style="left:729px;top:612.34px;font-size:12px;line-height:12px;color:#d2d2d2;transform:scaleX(0.9571);transform-origin:left center;">Microsoft Excel W...</div><div class="a" style="right:1005px;top:612.34px;font-size:12px;line-height:12px;color:#d2d2d2;text-align:right;transform:scaleX(0.9146);transform-origin:right center;">1 KB</div><svg style="position:absolute;left:241px;top:631px" width="17" height="16" viewBox="0 0 17 16" ><path d="M1 2.2 Q1 1.2 2 1.2 H6.2 L7.8 2.8 H15 Q16 2.8 16 3.8 V13.2 Q16 14.2 15 14.2 H2 Q1 14.2 1 13.2 Z" fill="#eeaa1e"/><path d="M1 4.6 H16 V13.2 Q16 14.2 15 14.2 H2 Q1 14.2 1 13.2 Z" fill="#fdd46c"/><circle cx="5.2" cy="11.2" r="4.8" fill="#c9f5d6"/><circle cx="5.2" cy="11.2" r="3.8000000000000003" fill="#14844a"/><path d="M3.4000000000000004 11.299999999999999 L4.7 12.5 L7.1 9.799999999999999" stroke="#9ff0bd" stroke-width="1" fill="none"/></svg><div class="a" style="left:262px;top:633.34px;font-size:12px;line-height:12px;color:#f4f4f4;transform:scaleX(0.9058);transform-origin:left center;">FAKTUR MASUKAN</div><div class="a" style="left:585px;top:633.34px;font-size:12px;line-height:12px;color:#d2d2d2;transform:scaleX(0.9300);transform-origin:left center;">31/01/2026 09:08</div><div class="a" style="left:729px;top:633.34px;font-size:12px;line-height:12px;color:#d2d2d2;transform:scaleX(0.9744);transform-origin:left center;">File folder</div><svg style="position:absolute;left:241px;top:652px" width="17" height="16" viewBox="0 0 17 16" ><path d="M1 2.2 Q1 1.2 2 1.2 H6.2 L7.8 2.8 H15 Q16 2.8 16 3.8 V13.2 Q16 14.2 15 14.2 H2 Q1 14.2 1 13.2 Z" fill="#eeaa1e"/><path d="M1 4.6 H16 V13.2 Q16 14.2 15 14.2 H2 Q1 14.2 1 13.2 Z" fill="#fdd46c"/><circle cx="5.2" cy="11.2" r="4.8" fill="#c9f5d6"/><circle cx="5.2" cy="11.2" r="3.8000000000000003" fill="#14844a"/><path d="M3.4000000000000004 11.299999999999999 L4.7 12.5 L7.1 9.799999999999999" stroke="#9ff0bd" stroke-width="1" fill="none"/></svg><div class="a" style="left:262px;top:654.34px;font-size:12px;line-height:12px;color:#f4f4f4;transform:scaleX(0.9094);transform-origin:left center;">IMPOR A1</div><div class="a" style="left:585px;top:654.34px;font-size:12px;line-height:12px;color:#d2d2d2;transform:scaleX(0.9300);transform-origin:left center;">30/01/2026 18:22</div><div class="a" style="left:729px;top:654.34px;font-size:12px;line-height:12px;color:#d2d2d2;transform:scaleX(0.9744);transform-origin:left center;">File folder</div><svg style="position:absolute;left:241px;top:673px" width="17" height="16" viewBox="0 0 17 16" ><path d="M1 2.2 Q1 1.2 2 1.2 H6.2 L7.8 2.8 H15 Q16 2.8 16 3.8 V13.2 Q16 14.2 15 14.2 H2 Q1 14.2 1 13.2 Z" fill="#eeaa1e"/><path d="M1 4.6 H16 V13.2 Q16 14.2 15 14.2 H2 Q1 14.2 1 13.2 Z" fill="#fdd46c"/><circle cx="5.2" cy="11.2" r="4.8" fill="#c9f5d6"/><circle cx="5.2" cy="11.2" r="3.8000000000000003" fill="#14844a"/><path d="M3.4000000000000004 11.299999999999999 L4.7 12.5 L7.1 9.799999999999999" stroke="#9ff0bd" stroke-width="1" fill="none"/></svg><div class="a" style="left:262px;top:675.34px;font-size:12px;line-height:12px;color:#f4f4f4;transform:scaleX(0.9100);transform-origin:left center;">IMPOR 21 ULANG</div><div class="a" style="left:585px;top:675.34px;font-size:12px;line-height:12px;color:#d2d2d2;transform:scaleX(0.9300);transform-origin:left center;">30/01/2026 18:22</div><div class="a" style="left:729px;top:675.34px;font-size:12px;line-height:12px;color:#d2d2d2;transform:scaleX(0.9744);transform-origin:left center;">File folder</div><svg style="position:absolute;left:241px;top:694px" width="17" height="16" viewBox="0 0 17 16" ><path d="M1 2.2 Q1 1.2 2 1.2 H6.2 L7.8 2.8 H15 Q16 2.8 16 3.8 V13.2 Q16 14.2 15 14.2 H2 Q1 14.2 1 13.2 Z" fill="#eeaa1e"/><path d="M1 4.6 H16 V13.2 Q16 14.2 15 14.2 H2 Q1 14.2 1 13.2 Z" fill="#fdd46c"/><circle cx="5.2" cy="11.2" r="4.8" fill="#c9f5d6"/><circle cx="5.2" cy="11.2" r="3.8000000000000003" fill="#14844a"/><path d="M3.4000000000000004 11.299999999999999 L4.7 12.5 L7.1 9.799999999999999" stroke="#9ff0bd" stroke-width="1" fill="none"/></svg><div class="a" style="left:262px;top:696.34px;font-size:12px;line-height:12px;color:#f4f4f4;transform:scaleX(0.9064);transform-origin:left center;">SPT MASA LENGKAP</div><div class="a" style="left:585px;top:696.34px;font-size:12px;line-height:12px;color:#d2d2d2;transform:scaleX(0.9300);transform-origin:left center;">26/01/2026 17:44</div><div class="a" style="left:729px;top:696.34px;font-size:12px;line-height:12px;color:#d2d2d2;transform:scaleX(0.9744);transform-origin:left center;">File folder</div><svg style="position:absolute;left:241px;top:715px" width="17" height="16" viewBox="0 0 17 16" ><path d="M1 2.2 Q1 1.2 2 1.2 H6.2 L7.8 2.8 H15 Q16 2.8 16 3.8 V13.2 Q16 14.2 15 14.2 H2 Q1 14.2 1 13.2 Z" fill="#eeaa1e"/><path d="M1 4.6 H16 V13.2 Q16 14.2 15 14.2 H2 Q1 14.2 1 13.2 Z" fill="#fdd46c"/><circle cx="5.2" cy="11.2" r="4.8" fill="#c9f5d6"/><circle cx="5.2" cy="11.2" r="3.8000000000000003" fill="#14844a"/><path d="M3.4000000000000004 11.299999999999999 L4.7 12.5 L7.1 9.799999999999999" stroke="#9ff0bd" stroke-width="1" fill="none"/></svg><div class="a" style="left:262px;top:717.34px;font-size:12px;line-height:12px;color:#f4f4f4;transform:scaleX(0.9726);transform-origin:left center;">Data Pembukuan</div><div class="a" style="left:585px;top:717.34px;font-size:12px;line-height:12px;color:#d2d2d2;transform:scaleX(0.9300);transform-origin:left center;">26/01/2026 11:28</div><div class="a" style="left:729px;top:717.34px;font-size:12px;line-height:12px;color:#d2d2d2;transform:scaleX(0.9744);transform-origin:left center;">File folder</div><svg style="position:absolute;left:241px;top:736px" width="17" height="16" viewBox="0 0 17 16" ><path d="M1 2.2 Q1 1.2 2 1.2 H6.2 L7.8 2.8 H15 Q16 2.8 16 3.8 V13.2 Q16 14.2 15 14.2 H2 Q1 14.2 1 13.2 Z" fill="#eeaa1e"/><path d="M1 4.6 H16 V13.2 Q16 14.2 15 14.2 H2 Q1 14.2 1 13.2 Z" fill="#fdd46c"/><circle cx="5.2" cy="11.2" r="4.8" fill="#c9f5d6"/><circle cx="5.2" cy="11.2" r="3.8000000000000003" fill="#14844a"/><path d="M3.4000000000000004 11.299999999999999 L4.7 12.5 L7.1 9.799999999999999" stroke="#9ff0bd" stroke-width="1" fill="none"/></svg><div class="a" style="left:262px;top:738.34px;font-size:12px;line-height:12px;color:#f4f4f4;transform:scaleX(0.9063);transform-origin:left center;">DATA GAJI</div><div class="a" style="left:585px;top:738.34px;font-size:12px;line-height:12px;color:#d2d2d2;transform:scaleX(0.9300);transform-origin:left center;">14/01/2026 11:49</div><div class="a" style="left:729px;top:738.34px;font-size:12px;line-height:12px;color:#d2d2d2;transform:scaleX(0.9744);transform-origin:left center;">File folder</div><svg style="position:absolute;left:241px;top:757px" width="17" height="16" viewBox="0 0 17 16" ><path d="M1 2.2 Q1 1.2 2 1.2 H6.2 L7.8 2.8 H15 Q16 2.8 16 3.8 V13.2 Q16 14.2 15 14.2 H2 Q1 14.2 1 13.2 Z" fill="#eeaa1e"/><path d="M1 4.6 H16 V13.2 Q16 14.2 15 14.2 H2 Q1 14.2 1 13.2 Z" fill="#fdd46c"/><circle cx="5.2" cy="11.2" r="4.8" fill="#c9f5d6"/><circle cx="5.2" cy="11.2" r="3.8000000000000003" fill="#14844a"/><path d="M3.4000000000000004 11.299999999999999 L4.7 12.5 L7.1 9.799999999999999" stroke="#9ff0bd" stroke-width="1" fill="none"/></svg><div class="a" style="left:262px;top:759.34px;font-size:12px;line-height:12px;color:#f4f4f4;transform:scaleX(0.9124);transform-origin:left center;">IMPOR 21</div><div class="a" style="left:585px;top:759.34px;font-size:12px;line-height:12px;color:#d2d2d2;transform:scaleX(0.9300);transform-origin:left center;">03/01/2026 14:05</div><div class="a" style="left:729px;top:759.34px;font-size:12px;line-height:12px;color:#d2d2d2;transform:scaleX(0.9744);transform-origin:left center;">File folder</div><svg style="position:absolute;left:241px;top:778px" width="17" height="16" viewBox="0 0 17 16" ><path d="M1 2.2 Q1 1.2 2 1.2 H6.2 L7.8 2.8 H15 Q16 2.8 16 3.8 V13.2 Q16 14.2 15 14.2 H2 Q1 14.2 1 13.2 Z" fill="#eeaa1e"/><path d="M1 4.6 H16 V13.2 Q16 14.2 15 14.2 H2 Q1 14.2 1 13.2 Z" fill="#fdd46c"/><circle cx="5.2" cy="11.2" r="4.8" fill="#c9f5d6"/><circle cx="5.2" cy="11.2" r="3.8000000000000003" fill="#14844a"/><path d="M3.4000000000000004 11.299999999999999 L4.7 12.5 L7.1 9.799999999999999" stroke="#9ff0bd" stroke-width="1" fill="none"/></svg><div class="a" style="left:262px;top:780.34px;font-size:12px;line-height:12px;color:#f4f4f4;transform:scaleX(0.9058);transform-origin:left center;">PAJAK MASUKAN</div><div class="a" style="left:585px;top:780.34px;font-size:12px;line-height:12px;color:#d2d2d2;transform:scaleX(0.9300);transform-origin:left center;">24/12/2025 10:54</div><div class="a" style="left:729px;top:780.34px;font-size:12px;line-height:12px;color:#d2d2d2;transform:scaleX(0.9744);transform-origin:left center;">File folder</div><svg style="position:absolute;left:241px;top:799px" width="17" height="16" viewBox="0 0 17 16" ><path d="M1 2.2 Q1 1.2 2 1.2 H6.2 L7.8 2.8 H15 Q16 2.8 16 3.8 V13.2 Q16 14.2 15 14.2 H2 Q1 14.2 1 13.2 Z" fill="#eeaa1e"/><path d="M1 4.6 H16 V13.2 Q16 14.2 15 14.2 H2 Q1 14.2 1 13.2 Z" fill="#fdd46c"/><circle cx="5.2" cy="11.2" r="4.8" fill="#c9f5d6"/><circle cx="5.2" cy="11.2" r="3.8000000000000003" fill="#14844a"/><path d="M3.4000000000000004 11.299999999999999 L4.7 12.5 L7.1 9.799999999999999" stroke="#9ff0bd" stroke-width="1" fill="none"/></svg><div class="a" style="left:262px;top:801.34px;font-size:12px;line-height:12px;color:#f4f4f4;transform:scaleX(0.9058);transform-origin:left center;">PAJAK KELUARAN</div><div class="a" style="left:585px;top:801.34px;font-size:12px;line-height:12px;color:#d2d2d2;transform:scaleX(0.9300);transform-origin:left center;">24/12/2025 10:37</div><div class="a" style="left:729px;top:801.34px;font-size:12px;line-height:12px;color:#d2d2d2;transform:scaleX(0.9744);transform-origin:left center;">File folder</div><svg style="position:absolute;left:241px;top:820px" width="17" height="16" viewBox="0 0 17 16" ><path d="M1 2.2 Q1 1.2 2 1.2 H6.2 L7.8 2.8 H15 Q16 2.8 16 3.8 V13.2 Q16 14.2 15 14.2 H2 Q1 14.2 1 13.2 Z" fill="#eeaa1e"/><path d="M1 4.6 H16 V13.2 Q16 14.2 15 14.2 H2 Q1 14.2 1 13.2 Z" fill="#fdd46c"/><circle cx="5.2" cy="11.2" r="4.8" fill="#c9f5d6"/><circle cx="5.2" cy="11.2" r="3.8000000000000003" fill="#14844a"/><path d="M3.4000000000000004 11.299999999999999 L4.7 12.5 L7.1 9.799999999999999" stroke="#9ff0bd" stroke-width="1" fill="none"/></svg><div class="a" style="left:262px;top:822.34px;font-size:12px;line-height:12px;color:#f4f4f4;transform:scaleX(0.9222);transform-origin:left center;">SP2DK 2023&amp;2024</div><div class="a" style="left:585px;top:822.34px;font-size:12px;line-height:12px;color:#d2d2d2;transform:scaleX(0.9300);transform-origin:left center;">19/12/2025 15:28</div><div class="a" style="left:729px;top:822.34px;font-size:12px;line-height:12px;color:#d2d2d2;transform:scaleX(0.9744);transform-origin:left center;">File folder</div><svg style="position:absolute;left:241px;top:841px" width="17" height="16" viewBox="0 0 17 16" ><path d="M1 2.2 Q1 1.2 2 1.2 H6.2 L7.8 2.8 H15 Q16 2.8 16 3.8 V13.2 Q16 14.2 15 14.2 H2 Q1 14.2 1 13.2 Z" fill="#eeaa1e"/><path d="M1 4.6 H16 V13.2 Q16 14.2 15 14.2 H2 Q1 14.2 1 13.2 Z" fill="#fdd46c"/><circle cx="5.2" cy="11.2" r="4.8" fill="#c9f5d6"/><circle cx="5.2" cy="11.2" r="3.8000000000000003" fill="#14844a"/><path d="M3.4000000000000004 11.299999999999999 L4.7 12.5 L7.1 9.799999999999999" stroke="#9ff0bd" stroke-width="1" fill="none"/></svg><div class="a" style="left:262px;top:843.34px;font-size:12px;line-height:12px;color:#f4f4f4;transform:scaleX(0.9300);transform-origin:left center;">2025</div><div class="a" style="left:585px;top:843.34px;font-size:12px;line-height:12px;color:#d2d2d2;transform:scaleX(0.9300);transform-origin:left center;">03/12/2025 17:30</div><div class="a" style="left:729px;top:843.34px;font-size:12px;line-height:12px;color:#d2d2d2;transform:scaleX(0.9744);transform-origin:left center;">File folder</div><svg style="position:absolute;left:241px;top:862px" width="17" height="16" viewBox="0 0 17 16" ><path d="M1 2.2 Q1 1.2 2 1.2 H6.2 L7.8 2.8 H15 Q16 2.8 16 3.8 V13.2 Q16 14.2 15 14.2 H2 Q1 14.2 1 13.2 Z" fill="#eeaa1e"/><path d="M1 4.6 H16 V13.2 Q16 14.2 15 14.2 H2 Q1 14.2 1 13.2 Z" fill="#fdd46c"/><circle cx="5.2" cy="11.2" r="4.8" fill="#c9f5d6"/><circle cx="5.2" cy="11.2" r="3.8000000000000003" fill="#14844a"/><path d="M3.4000000000000004 11.299999999999999 L4.7 12.5 L7.1 9.799999999999999" stroke="#9ff0bd" stroke-width="1" fill="none"/></svg><div class="a" style="left:262px;top:864.34px;font-size:12px;line-height:12px;color:#f4f4f4;transform:scaleX(0.9060);transform-origin:left center;">PREPAID PPH</div><div class="a" style="left:585px;top:864.34px;font-size:12px;line-height:12px;color:#d2d2d2;transform:scaleX(0.9300);transform-origin:left center;">03/12/2025 17:26</div><div class="a" style="left:729px;top:864.34px;font-size:12px;line-height:12px;color:#d2d2d2;transform:scaleX(0.9744);transform-origin:left center;">File folder</div><svg style="position:absolute;left:241px;top:883px" width="17" height="16" viewBox="0 0 17 16" ><path d="M1 2.2 Q1 1.2 2 1.2 H6.2 L7.8 2.8 H15 Q16 2.8 16 3.8 V13.2 Q16 14.2 15 14.2 H2 Q1 14.2 1 13.2 Z" fill="#eeaa1e"/><path d="M1 4.6 H16 V13.2 Q16 14.2 15 14.2 H2 Q1 14.2 1 13.2 Z" fill="#fdd46c"/><circle cx="5.2" cy="11.2" r="4.8" fill="#c9f5d6"/><circle cx="5.2" cy="11.2" r="3.8000000000000003" fill="#14844a"/><path d="M3.4000000000000004 11.299999999999999 L4.7 12.5 L7.1 9.799999999999999" stroke="#9ff0bd" stroke-width="1" fill="none"/></svg><div class="a" style="left:262px;top:885.34px;font-size:12px;line-height:12px;color:#f4f4f4;transform:scaleX(0.9063);transform-origin:left center;">DATA BPJS</div><div class="a" style="left:585px;top:885.34px;font-size:12px;line-height:12px;color:#d2d2d2;transform:scaleX(0.9300);transform-origin:left center;">03/12/2025 17:24</div><div class="a" style="left:729px;top:885.34px;font-size:12px;line-height:12px;color:#d2d2d2;transform:scaleX(0.9744);transform-origin:left center;">File folder</div><svg style="position:absolute;left:241px;top:904px" width="17" height="16" viewBox="0 0 17 16" ><path d="M1 2.2 Q1 1.2 2 1.2 H6.2 L7.8 2.8 H15 Q16 2.8 16 3.8 V13.2 Q16 14.2 15 14.2 H2 Q1 14.2 1 13.2 Z" fill="#eeaa1e"/><path d="M1 4.6 H16 V13.2 Q16 14.2 15 14.2 H2 Q1 14.2 1 13.2 Z" fill="#fdd46c"/><circle cx="5.2" cy="11.2" r="4.8" fill="#c9f5d6"/><circle cx="5.2" cy="11.2" r="3.8000000000000003" fill="#14844a"/><path d="M3.4000000000000004 11.299999999999999 L4.7 12.5 L7.1 9.799999999999999" stroke="#9ff0bd" stroke-width="1" fill="none"/></svg><div class="a" style="left:262px;top:906.34px;font-size:12px;line-height:12px;color:#f4f4f4;transform:scaleX(0.9712);transform-origin:left center;">Rekening Koran</div><div class="a" style="left:585px;top:906.34px;font-size:12px;line-height:12px;color:#d2d2d2;transform:scaleX(0.9300);transform-origin:left center;">03/12/2025 16:48</div><div class="a" style="left:729px;top:906.34px;font-size:12px;line-height:12px;color:#d2d2d2;transform:scaleX(0.9744);transform-origin:left center;">File folder</div><svg style="position:absolute;left:241px;top:925px" width="17" height="16" viewBox="0 0 17 16" ><path d="M1 2.2 Q1 1.2 2 1.2 H6.2 L7.8 2.8 H15 Q16 2.8 16 3.8 V13.2 Q16 14.2 15 14.2 H2 Q1 14.2 1 13.2 Z" fill="#eeaa1e"/><path d="M1 4.6 H16 V13.2 Q16 14.2 15 14.2 H2 Q1 14.2 1 13.2 Z" fill="#fdd46c"/><circle cx="5.2" cy="11.2" r="4.8" fill="#c9f5d6"/><circle cx="5.2" cy="11.2" r="3.8000000000000003" fill="#14844a"/><path d="M3.4000000000000004 11.299999999999999 L4.7 12.5 L7.1 9.799999999999999" stroke="#9ff0bd" stroke-width="1" fill="none"/></svg><div class="a" style="left:262px;top:927.34px;font-size:12px;line-height:12px;color:#f4f4f4;transform:scaleX(0.9060);transform-origin:left center;">SURAT PAJAK</div><div class="a" style="left:585px;top:927.34px;font-size:12px;line-height:12px;color:#d2d2d2;transform:scaleX(0.9300);transform-origin:left center;">03/12/2025 16:48</div><div class="a" style="left:729px;top:927.34px;font-size:12px;line-height:12px;color:#d2d2d2;transform:scaleX(0.9744);transform-origin:left center;">File folder</div><svg style="position:absolute;left:241px;top:946px" width="17" height="16" viewBox="0 0 17 16" ><path d="M1 2.2 Q1 1.2 2 1.2 H6.2 L7.8 2.8 H15 Q16 2.8 16 3.8 V13.2 Q16 14.2 15 14.2 H2 Q1 14.2 1 13.2 Z" fill="#eeaa1e"/><path d="M1 4.6 H16 V13.2 Q16 14.2 15 14.2 H2 Q1 14.2 1 13.2 Z" fill="#fdd46c"/><circle cx="5.2" cy="11.2" r="4.8" fill="#c9f5d6"/><circle cx="5.2" cy="11.2" r="3.8000000000000003" fill="#14844a"/><path d="M3.4000000000000004 11.299999999999999 L4.7 12.5 L7.1 9.799999999999999" stroke="#9ff0bd" stroke-width="1" fill="none"/></svg><div class="a" style="left:262px;top:948.34px;font-size:12px;line-height:12px;color:#f4f4f4;transform:scaleX(0.9050);transform-origin:left center;">LAINYA</div><div class="a" style="left:585px;top:948.34px;font-size:12px;line-height:12px;color:#d2d2d2;transform:scaleX(0.9300);transform-origin:left center;">03/12/2025 16:47</div><div class="a" style="left:729px;top:948.34px;font-size:12px;line-height:12px;color:#d2d2d2;transform:scaleX(0.9744);transform-origin:left center;">File folder</div><div class="a" style="left:1211px;top:135px;width:2px;height:842px;background:#2a2a2a;"></div><div class="a sh" style="left:1213px;top:135px;width:685px;height:842px;overflow:hidden;background:#ffffff"><div class="a" style="left:25px;top:604px;width:660px;height:23px;background:#ffff00;"></div><div class="a" style="left:25px;top:650px;width:660px;height:23px;background:#ffff00;"></div><div class="a" style="left:36px;top:651px;width:649px;height:22px;background:linear-gradient(#e6dc3a 0,#c9c200 3px,#c6bf00 100%);"></div><div class="a" style="left:25px;top:719px;width:660px;height:23px;background:#ffff00;"></div><div class="a" style="left:25px;top:765px;width:660px;height:23px;background:#ffff00;"></div><div class="a" style="left:36px;top:39px;width:649px;height:42px;background:#5b9bd5;"></div><div class="a" style="left:25px;top:39px;width:11px;height:1px;background:#dadada;"></div><div class="a" style="left:25px;top:60px;width:11px;height:1px;background:#dadada;"></div><div class="a" style="left:25px;top:81px;width:11px;height:1px;background:#dadada;"></div><div class="a" style="left:25px;top:102px;width:11px;height:1px;background:#dadada;"></div><div class="a" style="left:25px;top:123px;width:11px;height:1px;background:#dadada;"></div><div class="a" style="left:25px;top:144px;width:11px;height:1px;background:#dadada;"></div><div class="a" style="left:25px;top:167px;width:11px;height:1px;background:#dadada;"></div><div class="a" style="left:25px;top:190px;width:11px;height:1px;background:#dadada;"></div><div class="a" style="left:25px;top:213px;width:11px;height:1px;background:#dadada;"></div><div class="a" style="left:25px;top:236px;width:11px;height:1px;background:#dadada;"></div><div class="a" style="left:25px;top:259px;width:11px;height:1px;background:#dadada;"></div><div class="a" style="left:25px;top:282px;width:11px;height:1px;background:#dadada;"></div><div class="a" style="left:25px;top:305px;width:11px;height:1px;background:#dadada;"></div><div class="a" style="left:25px;top:328px;width:11px;height:1px;background:#dadada;"></div><div class="a" style="left:25px;top:351px;width:11px;height:1px;background:#dadada;"></div><div class="a" style="left:25px;top:374px;width:11px;height:1px;background:#dadada;"></div><div class="a" style="left:25px;top:397px;width:11px;height:1px;background:#dadada;"></div><div class="a" style="left:25px;top:420px;width:11px;height:1px;background:#dadada;"></div><div class="a" style="left:25px;top:443px;width:11px;height:1px;background:#dadada;"></div><div class="a" style="left:25px;top:466px;width:11px;height:1px;background:#dadada;"></div><div class="a" style="left:25px;top:489px;width:11px;height:1px;background:#dadada;"></div><div class="a" style="left:25px;top:512px;width:11px;height:1px;background:#dadada;"></div><div class="a" style="left:25px;top:535px;width:11px;height:1px;background:#dadada;"></div><div class="a" style="left:25px;top:558px;width:11px;height:1px;background:#dadada;"></div><div class="a" style="left:25px;top:581px;width:11px;height:1px;background:#dadada;"></div><div class="a" style="left:25px;top:604px;width:11px;height:1px;background:#dadada;"></div><div class="a" style="left:25px;top:627px;width:11px;height:1px;background:#dadada;"></div><div class="a" style="left:25px;top:650px;width:11px;height:1px;background:#dadada;"></div><div class="a" style="left:25px;top:673px;width:11px;height:1px;background:#dadada;"></div><div class="a" style="left:25px;top:696px;width:11px;height:1px;background:#dadada;"></div><div class="a" style="left:25px;top:719px;width:11px;height:1px;background:#dadada;"></div><div class="a" style="left:25px;top:742px;width:11px;height:1px;background:#dadada;"></div><div class="a" style="left:25px;top:765px;width:11px;height:1px;background:#dadada;"></div><div class="a" style="left:25px;top:788px;width:11px;height:1px;background:#dadada;"></div><div class="a" style="left:25px;top:811px;width:11px;height:1px;background:#dadada;"></div><div class="a" style="left:25px;top:831px;width:11px;height:1px;background:#dadada;"></div><div class="a" style="left:25px;top:851px;width:11px;height:1px;background:#dadada;"></div><div class="a" style="left:36px;top:39px;width:649px;height:1px;background:#dadada;"></div><div class="a" style="left:36px;top:811px;width:649px;height:1px;background:#dadada;"></div><div class="a" style="left:36px;top:831px;width:649px;height:1px;background:#dadada;"></div><div class="a" style="left:36px;top:19px;width:1px;height:20px;background:#dadada;"></div><div class="a" style="left:36px;top:811px;width:1px;height:31px;background:#dadada;"></div><div class="a" style="left:124px;top:19px;width:1px;height:20px;background:#dadada;"></div><div class="a" style="left:124px;top:811px;width:1px;height:31px;background:#dadada;"></div><div class="a" style="left:242px;top:19px;width:1px;height:20px;background:#dadada;"></div><div class="a" style="left:242px;top:811px;width:1px;height:31px;background:#dadada;"></div><div class="a" style="left:362px;top:19px;width:1px;height:20px;background:#dadada;"></div><div class="a" style="left:362px;top:811px;width:1px;height:31px;background:#dadada;"></div><div class="a" style="left:487px;top:19px;width:1px;height:20px;background:#dadada;"></div><div class="a" style="left:487px;top:811px;width:1px;height:31px;background:#dadada;"></div><div class="a" style="left:595px;top:19px;width:1px;height:20px;background:#dadada;"></div><div class="a" style="left:595px;top:811px;width:1px;height:31px;background:#dadada;"></div><div class="a" style="left:36px;top:39px;width:649px;height:1px;background:#111111;"></div><div class="a" style="left:124px;top:60px;width:561px;height:1px;background:#111111;"></div><div class="a" style="left:36px;top:81px;width:649px;height:1px;background:#111111;"></div><div class="a" style="left:36px;top:102px;width:649px;height:1px;background:#111111;"></div><div class="a" style="left:36px;top:123px;width:649px;height:1px;background:#111111;"></div><div class="a" style="left:36px;top:144px;width:649px;height:1px;background:#111111;"></div><div class="a" style="left:36px;top:167px;width:649px;height:1px;background:#111111;"></div><div class="a" style="left:36px;top:190px;width:649px;height:1px;background:#111111;"></div><div class="a" style="left:36px;top:213px;width:649px;height:1px;background:#111111;"></div><div class="a" style="left:36px;top:236px;width:649px;height:1px;background:#111111;"></div><div class="a" style="left:36px;top:259px;width:649px;height:1px;background:#111111;"></div><div class="a" style="left:36px;top:282px;width:649px;height:1px;background:#111111;"></div><div class="a" style="left:36px;top:305px;width:649px;height:1px;background:#111111;"></div><div class="a" style="left:36px;top:328px;width:649px;height:1px;background:#111111;"></div><div class="a" style="left:36px;top:351px;width:649px;height:1px;background:#111111;"></div><div class="a" style="left:36px;top:374px;width:649px;height:1px;background:#111111;"></div><div class="a" style="left:36px;top:397px;width:649px;height:1px;background:#111111;"></div><div class="a" style="left:36px;top:420px;width:649px;height:1px;background:#111111;"></div><div class="a" style="left:36px;top:443px;width:649px;height:1px;background:#111111;"></div><div class="a" style="left:36px;top:466px;width:649px;height:1px;background:#111111;"></div><div class="a" style="left:36px;top:489px;width:649px;height:1px;background:#111111;"></div><div class="a" style="left:36px;top:512px;width:649px;height:1px;background:#111111;"></div><div class="a" style="left:36px;top:535px;width:649px;height:1px;background:#111111;"></div><div class="a" style="left:36px;top:558px;width:649px;height:1px;background:#111111;"></div><div class="a" style="left:36px;top:581px;width:649px;height:1px;background:#111111;"></div><div class="a" style="left:36px;top:604px;width:649px;height:1px;background:#111111;"></div><div class="a" style="left:36px;top:627px;width:649px;height:1px;background:#111111;"></div><div class="a" style="left:36px;top:650px;width:649px;height:1px;background:#111111;"></div><div class="a" style="left:36px;top:673px;width:649px;height:1px;background:#111111;"></div><div class="a" style="left:36px;top:696px;width:649px;height:1px;background:#111111;"></div><div class="a" style="left:36px;top:719px;width:649px;height:1px;background:#111111;"></div><div class="a" style="left:36px;top:742px;width:649px;height:1px;background:#111111;"></div><div class="a" style="left:36px;top:765px;width:649px;height:1px;background:#111111;"></div><div class="a" style="left:36px;top:788px;width:649px;height:1px;background:#111111;"></div><div class="a" style="left:36px;top:811px;width:649px;height:1px;background:#111111;"></div><div class="a" style="left:36px;top:39px;width:1px;height:773px;background:#111111;"></div><div class="a" style="left:124px;top:39px;width:1px;height:773px;background:#111111;"></div><div class="a" style="left:242px;top:60px;width:1px;height:752px;background:#111111;"></div><div class="a" style="left:362px;top:39px;width:1px;height:773px;background:#111111;"></div><div class="a" style="left:487px;top:60px;width:1px;height:752px;background:#111111;"></div><div class="a" style="left:595px;top:39px;width:1px;height:773px;background:#111111;"></div><div class="a" style="left:25px;top:649px;width:660px;height:2px;background:#1f6e43;"></div><div class="a" style="left:25px;top:672px;width:660px;height:2px;background:#1f6e43;"></div><div class="a" style="left:24px;top:649px;width:2px;height:25px;background:#1f6e43;"></div><div class="a" style="left:26px;top:672px;width:4px;height:4px;background:#1f6e43;border:1px solid #fff"></div><div class="a" style="left:-119.75px;width:400px;text-align:center;top:54.49px;font-size:13.6px;line-height:13.6px;color:#0c2547;transform:scaleX(0.9500);transform-origin:center center;">BULAN</div><div class="a" style="left:43.5px;width:400px;text-align:center;top:44.49px;font-size:13.6px;line-height:13.6px;color:#0c2547;transform:scaleX(1.0265);transform-origin:center center;">Karyawan</div><div class="a" style="left:279px;width:400px;text-align:center;top:44.49px;font-size:13.6px;line-height:13.6px;color:#0c2547;transform:scaleX(0.9461);transform-origin:center center;">L-IB (RESIGN)</div><div class="a" style="left:-16.5px;width:400px;text-align:center;top:64.79px;font-size:13.6px;line-height:13.6px;color:#0c2547;transform:scaleX(0.9500);transform-origin:center center;">DPP</div><div class="a" style="left:102.5px;width:400px;text-align:center;top:64.79px;font-size:13.6px;line-height:13.6px;color:#0c2547;transform:scaleX(0.9568);transform-origin:center center;">PPh 21</div><div class="a" style="left:225px;width:400px;text-align:center;top:64.79px;font-size:13.6px;line-height:13.6px;color:#0c2547;transform:scaleX(0.9500);transform-origin:center center;">DPP</div><div class="a" style="left:341.5px;width:400px;text-align:center;top:64.79px;font-size:13.6px;line-height:13.6px;color:#0c2547;transform:scaleX(0.9568);transform-origin:center center;">PPh 21</div><div class="a" style="left:456px;width:400px;text-align:center;top:64.79px;font-size:13.6px;line-height:13.6px;color:#0c2547;transform:scaleX(0.9500);transform-origin:center center;">DPP</div><div class="a" style="left:59.59999999999991px;width:300px;text-align:right;top:23.99px;font-size:13.6px;line-height:13.6px;color:#1a1a1a;letter-spacing:-0.400px;">13.136.444</div><div class="a" style="left:36.5px;top:81px;width:87.5px;height:21px;overflow:hidden"><div class="a" style="left:2.5px;top:5.59px;font-size:13.6px;line-height:13.6px;color:#141414;transform:scaleX(0.9500);transform-origin:left center;">JANUARI</div></div><div class="a" style="left:-65.5px;width:300px;text-align:right;top:86.59px;font-size:13.6px;line-height:13.6px;color:#141414;transform:scaleX(0.9300);transform-origin:right center;">2.645.756.541,00</div><div class="a" style="left:59.59999999999991px;width:300px;text-align:right;top:86.59px;font-size:13.6px;line-height:13.6px;color:#141414;transform:scaleX(0.9300);transform-origin:right center;">13.136.444</div><div class="a" style="left:184.79999999999995px;width:300px;text-align:right;top:86.59px;font-size:13.6px;line-height:13.6px;color:#141414;transform:scaleX(0.9300);transform-origin:right center;">0</div><div class="a" style="left:292.5px;width:300px;text-align:right;top:86.59px;font-size:13.6px;line-height:13.6px;color:#141414;transform:scaleX(0.9300);transform-origin:right center;">0</div><div class="a" style="left:36.5px;top:102px;width:87.5px;height:21px;overflow:hidden"><div class="a" style="left:2.5px;top:5.59px;font-size:13.6px;line-height:13.6px;color:#c5172a;transform:scaleX(0.9988);transform-origin:left center;">Januari P1</div></div><div class="a" style="left:-65.5px;width:300px;text-align:right;top:107.59px;font-size:13.6px;line-height:13.6px;color:#c5172a;transform:scaleX(0.9300);transform-origin:right center;">2.487.342.885,00</div><div class="a" style="left:59.59999999999991px;width:300px;text-align:right;top:107.59px;font-size:13.6px;line-height:13.6px;color:#c5172a;transform:scaleX(0.9300);transform-origin:right center;">12.990.168</div><div class="a" style="left:179.70000000000005px;width:300px;text-align:right;top:107.59px;font-size:13.6px;line-height:13.6px;color:#c5172a;transform:scaleX(0.9300);transform-origin:right center;">148.074.518,00</div><div class="a" style="left:292.5px;width:300px;text-align:right;top:107.59px;font-size:13.6px;line-height:13.6px;color:#c5172a;transform:scaleX(0.9300);transform-origin:right center;">0</div><div class="a" style="left:36.5px;top:123px;width:87.5px;height:21px;overflow:hidden"><div class="a" style="left:2.5px;top:5.59px;font-size:13.6px;line-height:13.6px;color:#c5172a;transform:scaleX(0.9988);transform-origin:left center;">Januari P2</div></div><div class="a" style="left:-65.5px;width:300px;text-align:right;top:128.59px;font-size:13.6px;line-height:13.6px;color:#c5172a;transform:scaleX(0.9300);transform-origin:right center;">2.498.038.864,00</div><div class="a" style="left:59.59999999999991px;width:300px;text-align:right;top:128.59px;font-size:13.6px;line-height:13.6px;color:#c5172a;transform:scaleX(0.9300);transform-origin:right center;">12.990.168</div><div class="a" style="left:179.70000000000005px;width:300px;text-align:right;top:128.59px;font-size:13.6px;line-height:13.6px;color:#c5172a;transform:scaleX(0.9300);transform-origin:right center;">148.074.518,00</div><div class="a" style="left:292.5px;width:300px;text-align:right;top:128.59px;font-size:13.6px;line-height:13.6px;color:#c5172a;transform:scaleX(0.9300);transform-origin:right center;">0</div><div class="a" style="left:36.5px;top:144px;width:87.5px;height:23px;overflow:hidden"><div class="a" style="left:2.5px;top:6.59px;font-size:13.6px;line-height:13.6px;color:#c5172a;transform:scaleX(0.9988);transform-origin:left center;">Januari P3</div></div><div class="a" style="left:-65.5px;width:300px;text-align:right;top:150.59px;font-size:13.6px;line-height:13.6px;color:#c5172a;transform:scaleX(0.9300);transform-origin:right center;">2.498.038.864,00</div><div class="a" style="left:59.59999999999991px;width:300px;text-align:right;top:150.59px;font-size:13.6px;line-height:13.6px;color:#c5172a;transform:scaleX(0.9300);transform-origin:right center;">12.942.442</div><div class="a" style="left:179.70000000000005px;width:300px;text-align:right;top:150.59px;font-size:13.6px;line-height:13.6px;color:#c5172a;transform:scaleX(0.9300);transform-origin:right center;">148.074.518,00</div><div class="a" style="left:292.5px;width:300px;text-align:right;top:150.59px;font-size:13.6px;line-height:13.6px;color:#c5172a;transform:scaleX(0.9300);transform-origin:right center;">0</div><div class="a" style="left:36.5px;top:167px;width:87.5px;height:23px;overflow:hidden"><div class="a" style="left:2.5px;top:6.59px;font-size:13.6px;line-height:13.6px;color:#c5172a;transform:scaleX(0.9988);transform-origin:left center;">Januari P4</div></div><div class="a" style="left:-65.5px;width:300px;text-align:right;top:173.59px;font-size:13.6px;line-height:13.6px;color:#c5172a;transform:scaleX(0.9300);transform-origin:right center;">2.497.701.701,00</div><div class="a" style="left:59.59999999999991px;width:300px;text-align:right;top:173.59px;font-size:13.6px;line-height:13.6px;color:#c5172a;transform:scaleX(0.9300);transform-origin:right center;">12.942.442</div><div class="a" style="left:179.70000000000005px;width:300px;text-align:right;top:173.59px;font-size:13.6px;line-height:13.6px;color:#c5172a;transform:scaleX(0.9300);transform-origin:right center;">148.074.518,00</div><div class="a" style="left:644px;top:173.59px;font-size:13.6px;line-height:13.6px;color:#c5172a;transform:scaleX(0.9300);transform-origin:left center;">148.074.518,00</div><div class="a" style="left:36.5px;top:190px;width:87.5px;height:23px;overflow:hidden"><div class="a" style="left:2.5px;top:6.59px;font-size:13.6px;line-height:13.6px;color:#141414;transform:scaleX(0.9500);transform-origin:left center;">FEBUARI</div></div><div class="a" style="left:-65.5px;width:300px;text-align:right;top:196.59px;font-size:13.6px;line-height:13.6px;color:#141414;transform:scaleX(0.9300);transform-origin:right center;">2.589.094.187,00</div><div class="a" style="left:59.59999999999991px;width:300px;text-align:right;top:196.59px;font-size:13.6px;line-height:13.6px;color:#141414;transform:scaleX(0.9300);transform-origin:right center;">14.647.799</div><div class="a" style="left:292.5px;width:300px;text-align:right;top:196.59px;font-size:13.6px;line-height:13.6px;color:#141414;transform:scaleX(0.9300);transform-origin:right center;">0</div><div class="a" style="left:36.5px;top:213px;width:87.5px;height:23px;overflow:hidden"><div class="a" style="left:2.5px;top:6.59px;font-size:13.6px;line-height:13.6px;color:#c5172a;transform:scaleX(1.0004);transform-origin:left center;">Februari P1</div></div><div class="a" style="left:-65.5px;width:300px;text-align:right;top:219.59px;font-size:13.6px;line-height:13.6px;color:#c5172a;transform:scaleX(0.9300);transform-origin:right center;">2.519.408.478,00</div><div class="a" style="left:59.59999999999991px;width:300px;text-align:right;top:219.59px;font-size:13.6px;line-height:13.6px;color:#c5172a;transform:scaleX(0.9300);transform-origin:right center;">14.534.377</div><div class="a" style="left:179.70000000000005px;width:300px;text-align:right;top:219.59px;font-size:13.6px;line-height:13.6px;color:#c5172a;transform:scaleX(0.9300);transform-origin:right center;">67.072.567,00</div><div class="a" style="left:292.5px;width:300px;text-align:right;top:219.59px;font-size:13.6px;line-height:13.6px;color:#c5172a;transform:scaleX(0.9300);transform-origin:right center;">(60.782,00)</div><div class="a" style="left:621px;top:219.59px;font-size:13.6px;line-height:13.6px;color:#c5172a;transform:scaleX(0.9300);transform-origin:left center;">150.077.088,00</div><div class="a" style="left:36.5px;top:236px;width:87.5px;height:23px;overflow:hidden"><div class="a" style="left:2.5px;top:6.59px;font-size:13.6px;line-height:13.6px;color:#c5172a;transform:scaleX(1.0004);transform-origin:left center;">Februari P2</div></div><div class="a" style="left:-65.5px;width:300px;text-align:right;top:242.59px;font-size:13.6px;line-height:13.6px;color:#c5172a;transform:scaleX(0.9300);transform-origin:right center;">2.517.967.488,00</div><div class="a" style="left:59.59999999999991px;width:300px;text-align:right;top:242.59px;font-size:13.6px;line-height:13.6px;color:#c5172a;transform:scaleX(0.9300);transform-origin:right center;">14.534.377</div><div class="a" style="left:179.70000000000005px;width:300px;text-align:right;top:242.59px;font-size:13.6px;line-height:13.6px;color:#c5172a;transform:scaleX(0.9300);transform-origin:right center;">67.072.567,00</div><div class="a" style="left:292.5px;width:300px;text-align:right;top:242.59px;font-size:13.6px;line-height:13.6px;color:#c5172a;transform:scaleX(0.9300);transform-origin:right center;">(60.782,00)</div><div class="a" style="left:621px;top:242.59px;font-size:13.6px;line-height:13.6px;color:#c5172a;transform:scaleX(0.9300);transform-origin:left center;">150.077.088,00</div><div class="a" style="left:36.5px;top:259px;width:87.5px;height:23px;overflow:hidden"><div class="a" style="left:2.5px;top:6.59px;font-size:13.6px;line-height:13.6px;color:#141414;transform:scaleX(0.9500);transform-origin:left center;">MARET</div></div><div class="a" style="left:-65.5px;width:300px;text-align:right;top:265.59px;font-size:13.6px;line-height:13.6px;color:#141414;transform:scaleX(0.9300);transform-origin:right center;">3.880.000.394,00</div><div class="a" style="left:59.59999999999991px;width:300px;text-align:right;top:265.59px;font-size:13.6px;line-height:13.6px;color:#141414;transform:scaleX(0.9300);transform-origin:right center;">94.805.705</div><div class="a" style="left:184.79999999999995px;width:300px;text-align:right;top:265.59px;font-size:13.6px;line-height:13.6px;color:#141414;transform:scaleX(0.9300);transform-origin:right center;">0</div><div class="a" style="left:292.5px;width:300px;text-align:right;top:265.59px;font-size:13.6px;line-height:13.6px;color:#141414;transform:scaleX(0.9300);transform-origin:right center;">0</div><div class="a" style="left:36.5px;top:282px;width:87.5px;height:23px;overflow:hidden"><div class="a" style="left:2.5px;top:6.59px;font-size:13.6px;line-height:13.6px;color:#c5172a;transform:scaleX(0.9841);transform-origin:left center;">Maret P1</div></div><div class="a" style="left:-65.5px;width:300px;text-align:right;top:288.59px;font-size:13.6px;line-height:13.6px;color:#c5172a;transform:scaleX(0.9300);transform-origin:right center;">3.734.960.494,00</div><div class="a" style="left:59.59999999999991px;width:300px;text-align:right;top:288.59px;font-size:13.6px;line-height:13.6px;color:#c5172a;transform:scaleX(0.9300);transform-origin:right center;">94.146.095</div><div class="a" style="left:179.70000000000005px;width:300px;text-align:right;top:288.59px;font-size:13.6px;line-height:13.6px;color:#c5172a;transform:scaleX(0.9300);transform-origin:right center;">348.953.980,00</div><div class="a" style="left:292.5px;width:300px;text-align:right;top:288.59px;font-size:13.6px;line-height:13.6px;color:#c5172a;transform:scaleX(0.9300);transform-origin:right center;">(591.596,00)</div><div class="a" style="left:621px;top:288.59px;font-size:13.6px;line-height:13.6px;color:#c5172a;transform:scaleX(0.9300);transform-origin:left center;">859.899.320,00</div><div class="a" style="left:36.5px;top:305px;width:87.5px;height:23px;overflow:hidden"><div class="a" style="left:2.5px;top:6.59px;font-size:13.6px;line-height:13.6px;color:#c5172a;transform:scaleX(0.9841);transform-origin:left center;">Maret P2</div></div><div class="a" style="left:-65.5px;width:300px;text-align:right;top:311.59px;font-size:13.6px;line-height:13.6px;color:#c5172a;transform:scaleX(0.9300);transform-origin:right center;">3.734.303.381,00</div><div class="a" style="left:59.59999999999991px;width:300px;text-align:right;top:311.59px;font-size:13.6px;line-height:13.6px;color:#c5172a;transform:scaleX(0.9300);transform-origin:right center;">94.146.095</div><div class="a" style="left:179.70000000000005px;width:300px;text-align:right;top:311.59px;font-size:13.6px;line-height:13.6px;color:#c5172a;transform:scaleX(0.9300);transform-origin:right center;">353.741.149,00</div><div class="a" style="left:292.5px;width:300px;text-align:right;top:311.59px;font-size:13.6px;line-height:13.6px;color:#c5172a;transform:scaleX(0.9300);transform-origin:right center;">(591.596,00)</div><div class="a" style="left:621px;top:311.59px;font-size:13.6px;line-height:13.6px;color:#c5172a;transform:scaleX(0.9300);transform-origin:left center;">862.908.340,00</div><div class="a" style="left:36.5px;top:328px;width:87.5px;height:23px;overflow:hidden"><div class="a" style="left:2.5px;top:6.59px;font-size:13.6px;line-height:13.6px;color:#141414;transform:scaleX(0.9500);transform-origin:left center;">APRIL</div></div><div class="a" style="left:-65.5px;width:300px;text-align:right;top:334.59px;font-size:13.6px;line-height:13.6px;color:#141414;transform:scaleX(0.9300);transform-origin:right center;">2.365.364.805,00</div><div class="a" style="left:59.59999999999991px;width:300px;text-align:right;top:334.59px;font-size:13.6px;line-height:13.6px;color:#141414;transform:scaleX(0.9300);transform-origin:right center;">15.306.344</div><div class="a" style="left:184.79999999999995px;width:300px;text-align:right;top:334.59px;font-size:13.6px;line-height:13.6px;color:#141414;transform:scaleX(0.9300);transform-origin:right center;">0</div><div class="a" style="left:292.5px;width:300px;text-align:right;top:334.59px;font-size:13.6px;line-height:13.6px;color:#141414;transform:scaleX(0.9300);transform-origin:right center;">0</div><div class="a" style="left:36.5px;top:351px;width:87.5px;height:23px;overflow:hidden"><div class="a" style="left:2.5px;top:6.59px;font-size:13.6px;line-height:13.6px;color:#c5172a;transform:scaleX(0.9795);transform-origin:left center;">April P1</div></div><div class="a" style="left:-65.5px;width:300px;text-align:right;top:357.59px;font-size:13.6px;line-height:13.6px;color:#c5172a;transform:scaleX(0.9300);transform-origin:right center;">2.311.346.649,00</div><div class="a" style="left:59.59999999999991px;width:300px;text-align:right;top:357.59px;font-size:13.6px;line-height:13.6px;color:#c5172a;transform:scaleX(0.9300);transform-origin:right center;">15.267.513</div><div class="a" style="left:179.70000000000005px;width:300px;text-align:right;top:357.59px;font-size:13.6px;line-height:13.6px;color:#c5172a;transform:scaleX(0.9300);transform-origin:right center;">48.812.095,00</div><div class="a" style="left:292.5px;width:300px;text-align:right;top:357.59px;font-size:13.6px;line-height:13.6px;color:#c5172a;transform:scaleX(0.9300);transform-origin:right center;">(662.885,00)</div><div class="a" style="left:621px;top:357.59px;font-size:13.6px;line-height:13.6px;color:#c5172a;transform:scaleX(0.9300);transform-origin:left center;">215.476.410,00</div><div class="a" style="left:36.5px;top:374px;width:87.5px;height:23px;overflow:hidden"><div class="a" style="left:2.5px;top:6.59px;font-size:13.6px;line-height:13.6px;color:#141414;transform:scaleX(0.9500);transform-origin:left center;">MEI</div></div><div class="a" style="left:-65.5px;width:300px;text-align:right;top:380.59px;font-size:13.6px;line-height:13.6px;color:#141414;transform:scaleX(0.9300);transform-origin:right center;">2.517.968.111,00</div><div class="a" style="left:59.59999999999991px;width:300px;text-align:right;top:380.59px;font-size:13.6px;line-height:13.6px;color:#141414;transform:scaleX(0.9300);transform-origin:right center;">14.971.099</div><div class="a" style="left:184.79999999999995px;width:300px;text-align:right;top:380.59px;font-size:13.6px;line-height:13.6px;color:#141414;transform:scaleX(0.9300);transform-origin:right center;">0</div><div class="a" style="left:292.5px;width:300px;text-align:right;top:380.59px;font-size:13.6px;line-height:13.6px;color:#141414;transform:scaleX(0.9300);transform-origin:right center;">0</div><div class="a" style="left:36.5px;top:397px;width:87.5px;height:23px;overflow:hidden"><div class="a" style="left:2.5px;top:6.59px;font-size:13.6px;line-height:13.6px;color:#c5172a;transform:scaleX(0.9671);transform-origin:left center;">Mei P1</div></div><div class="a" style="left:-65.5px;width:300px;text-align:right;top:403.59px;font-size:13.6px;line-height:13.6px;color:#c5172a;transform:scaleX(0.9300);transform-origin:right center;">2.457.484.953,00</div><div class="a" style="left:59.59999999999991px;width:300px;text-align:right;top:403.59px;font-size:13.6px;line-height:13.6px;color:#c5172a;transform:scaleX(0.9300);transform-origin:right center;">14.574.911</div><div class="a" style="left:179.70000000000005px;width:300px;text-align:right;top:403.59px;font-size:13.6px;line-height:13.6px;color:#c5172a;transform:scaleX(0.9300);transform-origin:right center;">51.656.930,00</div><div class="a" style="left:292.5px;width:300px;text-align:right;top:403.59px;font-size:13.6px;line-height:13.6px;color:#c5172a;transform:scaleX(0.9300);transform-origin:right center;">(1.182.935,00)</div><div class="a" style="left:621px;top:403.59px;font-size:13.6px;line-height:13.6px;color:#c5172a;transform:scaleX(0.9300);transform-origin:left center;">298.943.600,00</div><div class="a" style="left:36.5px;top:420px;width:87.5px;height:23px;overflow:hidden"><div class="a" style="left:2.5px;top:6.59px;font-size:13.6px;line-height:13.6px;color:#141414;transform:scaleX(0.9500);transform-origin:left center;">JUNI</div></div><div class="a" style="left:-65.5px;width:300px;text-align:right;top:426.59px;font-size:13.6px;line-height:13.6px;color:#141414;transform:scaleX(0.9300);transform-origin:right center;">2.547.812.203,00</div><div class="a" style="left:59.59999999999991px;width:300px;text-align:right;top:426.59px;font-size:13.6px;line-height:13.6px;color:#141414;transform:scaleX(0.9300);transform-origin:right center;">17.074.491</div><div class="a" style="left:184.79999999999995px;width:300px;text-align:right;top:426.59px;font-size:13.6px;line-height:13.6px;color:#141414;transform:scaleX(0.9300);transform-origin:right center;">681.480</div><div class="a" style="left:292.5px;width:300px;text-align:right;top:426.59px;font-size:13.6px;line-height:13.6px;color:#141414;transform:scaleX(0.9300);transform-origin:right center;">-3.904.183</div><div class="a" style="left:36.5px;top:443px;width:87.5px;height:23px;overflow:hidden"><div class="a" style="left:2.5px;top:6.59px;font-size:13.6px;line-height:13.6px;color:#141414;transform:scaleX(0.9453);transform-origin:left center;">JUNI-P1</div></div><div class="a" style="left:-65.5px;width:300px;text-align:right;top:449.59px;font-size:13.6px;line-height:13.6px;color:#141414;transform:scaleX(0.9300);transform-origin:right center;">2.531.972.062,00</div><div class="a" style="left:59.59999999999991px;width:300px;text-align:right;top:449.59px;font-size:13.6px;line-height:13.6px;color:#141414;transform:scaleX(0.9300);transform-origin:right center;">17.074.491</div><div class="a" style="left:184.79999999999995px;width:300px;text-align:right;top:449.59px;font-size:13.6px;line-height:13.6px;color:#141414;transform:scaleX(0.9300);transform-origin:right center;">-1.917.320</div><div class="a" style="left:292.5px;width:300px;text-align:right;top:449.59px;font-size:13.6px;line-height:13.6px;color:#141414;transform:scaleX(0.9300);transform-origin:right center;">-4.977.114</div><div class="a" style="left:644px;top:449.59px;font-size:13.6px;line-height:13.6px;color:#141414;transform:scaleX(0.9300);transform-origin:left center;">263.344.000</div><div class="a" style="left:36.5px;top:466px;width:87.5px;height:23px;overflow:hidden"><div class="a" style="left:2.5px;top:6.59px;font-size:13.6px;line-height:13.6px;color:#141414;transform:scaleX(0.9453);transform-origin:left center;">JUNI-P2</div></div><div class="a" style="left:-65.5px;width:300px;text-align:right;top:472.59px;font-size:13.6px;line-height:13.6px;color:#141414;transform:scaleX(0.9300);transform-origin:right center;">2.531.972.062,00</div><div class="a" style="left:59.59999999999991px;width:300px;text-align:right;top:472.59px;font-size:13.6px;line-height:13.6px;color:#141414;transform:scaleX(0.9300);transform-origin:right center;">17.074.491</div><div class="a" style="left:184.79999999999995px;width:300px;text-align:right;top:472.59px;font-size:13.6px;line-height:13.6px;color:#141414;transform:scaleX(0.9300);transform-origin:right center;">-1.917.320</div><div class="a" style="left:292.5px;width:300px;text-align:right;top:472.59px;font-size:13.6px;line-height:13.6px;color:#141414;transform:scaleX(0.9300);transform-origin:right center;">-4.977.114</div><div class="a" style="left:644px;top:472.59px;font-size:13.6px;line-height:13.6px;color:#141414;transform:scaleX(0.9300);transform-origin:left center;">263.344.000</div><div class="a" style="left:36.5px;top:489px;width:87.5px;height:23px;overflow:hidden"><div class="a" style="left:2.5px;top:6.59px;font-size:13.6px;line-height:13.6px;color:#c5172a;transform:scaleX(0.9810);transform-origin:left center;">Juni P3</div></div><div class="a" style="left:-65.5px;width:300px;text-align:right;top:495.59px;font-size:13.6px;line-height:13.6px;color:#c5172a;transform:scaleX(0.9300);transform-origin:right center;">2.510.320.282,00</div><div class="a" style="left:59.59999999999991px;width:300px;text-align:right;top:495.59px;font-size:13.6px;line-height:13.6px;color:#c5172a;transform:scaleX(0.9300);transform-origin:right center;">17.064.742</div><div class="a" style="left:179.70000000000005px;width:300px;text-align:right;top:495.59px;font-size:13.6px;line-height:13.6px;color:#c5172a;transform:scaleX(0.9300);transform-origin:right center;">22.480.418,00</div><div class="a" style="left:292.5px;width:300px;text-align:right;top:495.59px;font-size:13.6px;line-height:13.6px;color:#c5172a;transform:scaleX(0.9300);transform-origin:right center;">(4.977.114,00)</div><div class="a" style="left:621px;top:495.59px;font-size:13.6px;line-height:13.6px;color:#c5172a;transform:scaleX(0.9300);transform-origin:left center;">380.586.650,00</div><div class="a" style="left:36.5px;top:512px;width:87.5px;height:23px;overflow:hidden"><div class="a" style="left:2.5px;top:6.59px;font-size:13.6px;line-height:13.6px;color:#141414;transform:scaleX(0.9500);transform-origin:left center;">JULI</div></div><div class="a" style="left:-65.5px;width:300px;text-align:right;top:518.59px;font-size:13.6px;line-height:13.6px;color:#141414;transform:scaleX(0.9300);transform-origin:right center;">2.531.208.714,00</div><div class="a" style="left:59.59999999999991px;width:300px;text-align:right;top:518.59px;font-size:13.6px;line-height:13.6px;color:#141414;transform:scaleX(0.9300);transform-origin:right center;">14.856.040</div><div class="a" style="left:184.79999999999995px;width:300px;text-align:right;top:518.59px;font-size:13.6px;line-height:13.6px;color:#141414;transform:scaleX(0.9300);transform-origin:right center;">46.304.389</div><div class="a" style="left:292.5px;width:300px;text-align:right;top:518.59px;font-size:13.6px;line-height:13.6px;color:#141414;transform:scaleX(0.9300);transform-origin:right center;">-2.583.369</div><div class="a" style="left:644px;top:518.59px;font-size:13.6px;line-height:13.6px;color:#141414;transform:scaleX(0.9300);transform-origin:left center;">473.951.000</div><div class="a" style="left:36.5px;top:535px;width:87.5px;height:23px;overflow:hidden"><div class="a" style="left:2.5px;top:6.59px;font-size:13.6px;line-height:13.6px;color:#141414;transform:scaleX(0.9451);transform-origin:left center;">JULI-P1</div></div><div class="a" style="left:-65.5px;width:300px;text-align:right;top:541.59px;font-size:13.6px;line-height:13.6px;color:#141414;transform:scaleX(0.9300);transform-origin:right center;">2.504.737.856,00</div><div class="a" style="left:59.59999999999991px;width:300px;text-align:right;top:541.59px;font-size:13.6px;line-height:13.6px;color:#141414;transform:scaleX(0.9300);transform-origin:right center;">14.856.040</div><div class="a" style="left:184.79999999999995px;width:300px;text-align:right;top:541.59px;font-size:13.6px;line-height:13.6px;color:#141414;transform:scaleX(0.9300);transform-origin:right center;">43.259.196</div><div class="a" style="left:292.5px;width:300px;text-align:right;top:541.59px;font-size:13.6px;line-height:13.6px;color:#141414;transform:scaleX(0.9300);transform-origin:right center;">-2.583.369</div><div class="a" style="left:644px;top:541.59px;font-size:13.6px;line-height:13.6px;color:#141414;transform:scaleX(0.9300);transform-origin:left center;">477.121.000</div><div class="a" style="left:36.5px;top:558px;width:87.5px;height:23px;overflow:hidden"><div class="a" style="left:2.5px;top:6.59px;font-size:13.6px;line-height:13.6px;color:#c5172a;transform:scaleX(0.9744);transform-origin:left center;">Juli P2</div></div><div class="a" style="left:-65.5px;width:300px;text-align:right;top:564.59px;font-size:13.6px;line-height:13.6px;color:#c5172a;transform:scaleX(0.9300);transform-origin:right center;">2.447.980.285,00</div><div class="a" style="left:59.59999999999991px;width:300px;text-align:right;top:564.59px;font-size:13.6px;line-height:13.6px;color:#c5172a;transform:scaleX(0.9300);transform-origin:right center;">14.854.667</div><div class="a" style="left:184.79999999999995px;width:300px;text-align:right;top:564.59px;font-size:13.6px;line-height:13.6px;color:#c5172a;transform:scaleX(0.9300);transform-origin:right center;">88.184.982</div><div class="a" style="left:292.5px;width:300px;text-align:right;top:564.59px;font-size:13.6px;line-height:13.6px;color:#c5172a;transform:scaleX(0.9300);transform-origin:right center;">-2.583.369</div><div class="a" style="left:644px;top:564.59px;font-size:13.6px;line-height:13.6px;color:#c5172a;transform:scaleX(0.9300);transform-origin:left center;">839.810.000</div><div class="a" style="left:36.5px;top:581px;width:87.5px;height:23px;overflow:hidden"><div class="a" style="left:2.5px;top:6.59px;font-size:13.6px;line-height:13.6px;color:#141414;transform:scaleX(0.9500);transform-origin:left center;">AGUSTUS</div></div><div class="a" style="left:-65.5px;width:300px;text-align:right;top:587.59px;font-size:13.6px;line-height:13.6px;color:#141414;transform:scaleX(0.9300);transform-origin:right center;">2.638.946.520,00</div><div class="a" style="left:59.59999999999991px;width:300px;text-align:right;top:587.59px;font-size:13.6px;line-height:13.6px;color:#141414;transform:scaleX(0.9300);transform-origin:right center;">16.480.706</div><div class="a" style="left:184.79999999999995px;width:300px;text-align:right;top:587.59px;font-size:13.6px;line-height:13.6px;color:#141414;transform:scaleX(0.9300);transform-origin:right center;">49.150.012</div><div class="a" style="left:292.5px;width:300px;text-align:right;top:587.59px;font-size:13.6px;line-height:13.6px;color:#141414;transform:scaleX(0.9300);transform-origin:right center;">-1.616.509</div><div class="a" style="left:644px;top:587.59px;font-size:13.6px;line-height:13.6px;color:#141414;transform:scaleX(0.9300);transform-origin:left center;">418.424.000</div><div class="a" style="left:36.5px;top:604px;width:87.5px;height:23px;overflow:hidden"><div class="a" style="left:2.5px;top:6.59px;font-size:13.6px;line-height:13.6px;color:#141414;transform:scaleX(0.9986);transform-origin:left center;">Agustus P1</div></div><div class="a" style="left:-65.5px;width:300px;text-align:right;top:610.59px;font-size:13.6px;line-height:13.6px;color:#141414;transform:scaleX(0.9300);transform-origin:right center;">2.604.436.650,00</div><div class="a" style="left:59.59999999999991px;width:300px;text-align:right;top:610.59px;font-size:13.6px;line-height:13.6px;color:#141414;transform:scaleX(0.9300);transform-origin:right center;">16.580.706</div><div class="a" style="left:184.79999999999995px;width:300px;text-align:right;top:610.59px;font-size:13.6px;line-height:13.6px;color:#141414;transform:scaleX(0.9300);transform-origin:right center;">87.727.761</div><div class="a" style="left:36.5px;top:627px;width:87.5px;height:23px;overflow:hidden"><div class="a" style="left:2.5px;top:6.59px;font-size:13.6px;line-height:13.6px;color:#141414;transform:scaleX(0.9500);transform-origin:left center;">SEPTEMBER</div></div><div class="a" style="left:-65.5px;width:300px;text-align:right;top:633.59px;font-size:13.6px;line-height:13.6px;color:#141414;transform:scaleX(0.9300);transform-origin:right center;">2.682.445.990,00</div><div class="a" style="left:59.59999999999991px;width:300px;text-align:right;top:633.59px;font-size:13.6px;line-height:13.6px;color:#141414;transform:scaleX(0.9300);transform-origin:right center;">16.662.153</div><div class="a" style="left:184.79999999999995px;width:300px;text-align:right;top:633.59px;font-size:13.6px;line-height:13.6px;color:#141414;transform:scaleX(0.9300);transform-origin:right center;">52.504.997</div><div class="a" style="left:292.5px;width:300px;text-align:right;top:633.59px;font-size:13.6px;line-height:13.6px;color:#141414;transform:scaleX(0.9300);transform-origin:right center;">-2.366.033</div><div class="a" style="left:644px;top:633.59px;font-size:13.6px;line-height:13.6px;color:#141414;transform:scaleX(0.9300);transform-origin:left center;">398.751.000</div><div class="a" style="left:36.5px;top:650px;width:87.5px;height:23px;overflow:hidden"><div class="a" style="left:2.5px;top:6.59px;font-size:13.6px;line-height:13.6px;color:#141414;transform:scaleX(1.0069);transform-origin:left center;">September P1</div></div><div class="a" style="left:-65.5px;width:300px;text-align:right;top:656.59px;font-size:13.6px;line-height:13.6px;color:#141414;transform:scaleX(0.9300);transform-origin:right center;">2.642.899.586,35</div><div class="a" style="left:59.59999999999991px;width:300px;text-align:right;top:656.59px;font-size:13.6px;line-height:13.6px;color:#141414;transform:scaleX(0.9300);transform-origin:right center;">16.662.151</div><div class="a" style="left:36.5px;top:673px;width:87.5px;height:23px;overflow:hidden"><div class="a" style="left:2.5px;top:6.59px;font-size:13.6px;line-height:13.6px;color:#141414;transform:scaleX(0.9500);transform-origin:left center;">OKTOBER</div></div><div class="a" style="left:-65.5px;width:300px;text-align:right;top:679.59px;font-size:13.6px;line-height:13.6px;color:#141414;transform:scaleX(0.9300);transform-origin:right center;">2.673.605.290,00</div><div class="a" style="left:59.59999999999991px;width:300px;text-align:right;top:679.59px;font-size:13.6px;line-height:13.6px;color:#141414;transform:scaleX(0.9300);transform-origin:right center;">16.008.422</div><div class="a" style="left:184.79999999999995px;width:300px;text-align:right;top:679.59px;font-size:13.6px;line-height:13.6px;color:#141414;transform:scaleX(0.9300);transform-origin:right center;">46.656.960</div><div class="a" style="left:292.5px;width:300px;text-align:right;top:679.59px;font-size:13.6px;line-height:13.6px;color:#141414;transform:scaleX(0.9300);transform-origin:right center;">-984.115</div><div class="a" style="left:644px;top:679.59px;font-size:13.6px;line-height:13.6px;color:#141414;transform:scaleX(0.9300);transform-origin:left center;">316.782.000</div><div class="a" style="left:36.5px;top:696px;width:87.5px;height:23px;overflow:hidden"><div class="a" style="left:2.5px;top:6.59px;font-size:13.6px;line-height:13.6px;color:#141414;transform:scaleX(0.9472);transform-origin:left center;">OKTOBER-P1</div></div><div class="a" style="left:-65.5px;width:300px;text-align:right;top:702.59px;font-size:13.6px;line-height:13.6px;color:#141414;transform:scaleX(0.9300);transform-origin:right center;">2.673.605.290,00</div><div class="a" style="left:59.59999999999991px;width:300px;text-align:right;top:702.59px;font-size:13.6px;line-height:13.6px;color:#141414;transform:scaleX(0.9300);transform-origin:right center;">16.008.422</div><div class="a" style="left:184.79999999999995px;width:300px;text-align:right;top:702.59px;font-size:13.6px;line-height:13.6px;color:#141414;transform:scaleX(0.9300);transform-origin:right center;">46.656.960</div><div class="a" style="left:292.5px;width:300px;text-align:right;top:702.59px;font-size:13.6px;line-height:13.6px;color:#141414;transform:scaleX(0.9300);transform-origin:right center;">-984.115</div><div class="a" style="left:644px;top:702.59px;font-size:13.6px;line-height:13.6px;color:#141414;transform:scaleX(0.9300);transform-origin:left center;">316.782.000</div><div class="a" style="left:36.5px;top:719px;width:87.5px;height:23px;overflow:hidden"><div class="a" style="left:2.5px;top:6.59px;font-size:13.6px;line-height:13.6px;color:#141414;transform:scaleX(0.9962);transform-origin:left center;">Oktober P2</div></div><div class="a" style="left:-65.5px;width:300px;text-align:right;top:725.59px;font-size:13.6px;line-height:13.6px;color:#141414;transform:scaleX(0.9300);transform-origin:right center;">2.646.995.026,43</div><div class="a" style="left:59.59999999999991px;width:300px;text-align:right;top:725.59px;font-size:13.6px;line-height:13.6px;color:#141414;transform:scaleX(0.9300);transform-origin:right center;">16.008.412</div><div class="a" style="left:36.5px;top:742px;width:87.5px;height:23px;overflow:hidden"><div class="a" style="left:2.5px;top:6.59px;font-size:13.6px;line-height:13.6px;color:#141414;transform:scaleX(0.9500);transform-origin:left center;">NOVEMBER</div></div><div class="a" style="left:-65.5px;width:300px;text-align:right;top:748.59px;font-size:13.6px;line-height:13.6px;color:#141414;transform:scaleX(0.9300);transform-origin:right center;">2.641.492.289,00</div><div class="a" style="left:59.59999999999991px;width:300px;text-align:right;top:748.59px;font-size:13.6px;line-height:13.6px;color:#141414;transform:scaleX(0.9300);transform-origin:right center;">14.652.730</div><div class="a" style="left:184.79999999999995px;width:300px;text-align:right;top:748.59px;font-size:13.6px;line-height:13.6px;color:#141414;transform:scaleX(0.9300);transform-origin:right center;">28.605.600</div><div class="a" style="left:292.5px;width:300px;text-align:right;top:748.59px;font-size:13.6px;line-height:13.6px;color:#141414;transform:scaleX(0.9300);transform-origin:right center;">-402.205</div><div class="a" style="left:644px;top:748.59px;font-size:13.6px;line-height:13.6px;color:#141414;transform:scaleX(0.9300);transform-origin:left center;">215.745.000</div><div class="a" style="left:36.5px;top:765px;width:87.5px;height:23px;overflow:hidden"><div class="a" style="left:2.5px;top:6.59px;font-size:13.6px;line-height:13.6px;color:#141414;transform:scaleX(1.0045);transform-origin:left center;">November P1</div></div><div class="a" style="left:-65.5px;width:300px;text-align:right;top:771.59px;font-size:13.6px;line-height:13.6px;color:#141414;transform:scaleX(0.9300);transform-origin:right center;">2.532.864.623,18</div><div class="a" style="left:54.5px;width:300px;text-align:right;top:771.59px;font-size:13.6px;line-height:13.6px;color:#141414;transform:scaleX(0.9300);transform-origin:right center;">14.623.765,78</div><div class="a" style="left:36.5px;top:788px;width:87.5px;height:23px;overflow:hidden"><div class="a" style="left:2.5px;top:6.59px;font-size:13.6px;line-height:13.6px;color:#141414;transform:scaleX(0.9500);transform-origin:left center;">DESEMBER</div></div><div class="a" style="left:-79px;width:300px;text-align:right;top:794.59px;font-size:13.6px;line-height:13.6px;color:#141414;">-</div><div class="a" style="left:59.59999999999991px;width:300px;text-align:right;top:794.59px;font-size:13.6px;line-height:13.6px;color:#141414;transform:scaleX(0.9300);transform-origin:right center;">0</div><div class="a" style="left:184.79999999999995px;width:300px;text-align:right;top:794.59px;font-size:13.6px;line-height:13.6px;color:#141414;transform:scaleX(0.9300);transform-origin:right center;">0</div><div class="a" style="left:292.5px;width:300px;text-align:right;top:794.59px;font-size:13.6px;line-height:13.6px;color:#141414;transform:scaleX(0.9300);transform-origin:right center;">0</div><div class="a" style="left:0px;top:0px;width:685px;height:19px;background:#0e0e0e;"></div><div class="a" style="left:25px;top:18px;width:660px;height:1px;background:#3b7a55;"></div><div class="a" style="left:25px;top:1px;width:1px;height:17px;background:#3c3c3c;"></div><div class="a" style="left:36px;top:1px;width:1px;height:17px;background:#3c3c3c;"></div><div class="a" style="left:124px;top:1px;width:1px;height:17px;background:#3c3c3c;"></div><div class="a" style="left:242px;top:1px;width:1px;height:17px;background:#3c3c3c;"></div><div class="a" style="left:362px;top:1px;width:1px;height:17px;background:#3c3c3c;"></div><div class="a" style="left:487px;top:1px;width:1px;height:17px;background:#3c3c3c;"></div><div class="a" style="left:595px;top:1px;width:1px;height:17px;background:#3c3c3c;"></div><div class="a" style="left:716px;top:1px;width:1px;height:17px;background:#3c3c3c;"></div><div class="a" style="left:-169.5px;width:400px;text-align:center;top:4.30px;font-size:13px;line-height:13px;color:#e6e6e6;">A</div><div class="a" style="left:-119.75px;width:400px;text-align:center;top:4.30px;font-size:13px;line-height:13px;color:#e6e6e6;">B</div><div class="a" style="left:-16.5px;width:400px;text-align:center;top:4.30px;font-size:13px;line-height:13px;color:#e6e6e6;">C</div><div class="a" style="left:102.5px;width:400px;text-align:center;top:4.30px;font-size:13px;line-height:13px;color:#e6e6e6;">D</div><div class="a" style="left:225.0px;width:400px;text-align:center;top:4.30px;font-size:13px;line-height:13px;color:#e6e6e6;">E</div><div class="a" style="left:341.5px;width:400px;text-align:center;top:4.30px;font-size:13px;line-height:13px;color:#e6e6e6;">F</div><div class="a" style="left:456.0px;width:400px;text-align:center;top:4.30px;font-size:13px;line-height:13px;color:#e6e6e6;">G</div><div class="a" style="left:0px;top:0px;width:25px;height:842px;background:#0e0e0e;"></div><svg style="position:absolute;left:11px;top:4px" width="13" height="13" viewBox="0 0 13 13" ><path d="M12 0 V12 H0Z" fill="#7a7a7a"/></svg><div class="a" style="left:0px;top:19px;width:25px;height:1px;background:#3a3a3a;"></div><div class="a" style="left:-187.5px;width:400px;text-align:center;top:25.13px;font-size:12.6px;line-height:12.6px;color:#e6e6e6;letter-spacing:-0.200px;">1</div><div class="a" style="left:0px;top:39px;width:25px;height:1px;background:#3a3a3a;"></div><div class="a" style="left:-187.5px;width:400px;text-align:center;top:45.63px;font-size:12.6px;line-height:12.6px;color:#e6e6e6;letter-spacing:-0.200px;">2</div><div class="a" style="left:0px;top:60px;width:25px;height:1px;background:#3a3a3a;"></div><div class="a" style="left:-187.5px;width:400px;text-align:center;top:66.63px;font-size:12.6px;line-height:12.6px;color:#e6e6e6;letter-spacing:-0.200px;">3</div><div class="a" style="left:0px;top:81px;width:25px;height:1px;background:#3a3a3a;"></div><div class="a" style="left:-187.5px;width:400px;text-align:center;top:87.63px;font-size:12.6px;line-height:12.6px;color:#e6e6e6;letter-spacing:-0.200px;">4</div><div class="a" style="left:0px;top:102px;width:25px;height:1px;background:#3a3a3a;"></div><div class="a" style="left:-187.5px;width:400px;text-align:center;top:108.63px;font-size:12.6px;line-height:12.6px;color:#e6e6e6;letter-spacing:-0.200px;">5</div><div class="a" style="left:0px;top:123px;width:25px;height:1px;background:#3a3a3a;"></div><div class="a" style="left:-187.5px;width:400px;text-align:center;top:129.63px;font-size:12.6px;line-height:12.6px;color:#e6e6e6;letter-spacing:-0.200px;">6</div><div class="a" style="left:0px;top:144px;width:25px;height:1px;background:#3a3a3a;"></div><div class="a" style="left:-187.5px;width:400px;text-align:center;top:151.63px;font-size:12.6px;line-height:12.6px;color:#e6e6e6;letter-spacing:-0.200px;">7</div><div class="a" style="left:0px;top:167px;width:25px;height:1px;background:#3a3a3a;"></div><div class="a" style="left:-187.5px;width:400px;text-align:center;top:174.63px;font-size:12.6px;line-height:12.6px;color:#e6e6e6;letter-spacing:-0.200px;">8</div><div class="a" style="left:0px;top:190px;width:25px;height:1px;background:#3a3a3a;"></div><div class="a" style="left:-187.5px;width:400px;text-align:center;top:197.63px;font-size:12.6px;line-height:12.6px;color:#e6e6e6;letter-spacing:-0.200px;">9</div><div class="a" style="left:0px;top:213px;width:25px;height:1px;background:#3a3a3a;"></div><div class="a" style="left:-187.5px;width:400px;text-align:center;top:220.63px;font-size:12.6px;line-height:12.6px;color:#e6e6e6;letter-spacing:-0.200px;">10</div><div class="a" style="left:0px;top:236px;width:25px;height:1px;background:#3a3a3a;"></div><div class="a" style="left:-187.5px;width:400px;text-align:center;top:243.63px;font-size:12.6px;line-height:12.6px;color:#e6e6e6;letter-spacing:-0.200px;">11</div><div class="a" style="left:0px;top:259px;width:25px;height:1px;background:#3a3a3a;"></div><div class="a" style="left:-187.5px;width:400px;text-align:center;top:266.63px;font-size:12.6px;line-height:12.6px;color:#e6e6e6;letter-spacing:-0.200px;">12</div><div class="a" style="left:0px;top:282px;width:25px;height:1px;background:#3a3a3a;"></div><div class="a" style="left:-187.5px;width:400px;text-align:center;top:289.63px;font-size:12.6px;line-height:12.6px;color:#e6e6e6;letter-spacing:-0.200px;">13</div><div class="a" style="left:0px;top:305px;width:25px;height:1px;background:#3a3a3a;"></div><div class="a" style="left:-187.5px;width:400px;text-align:center;top:312.63px;font-size:12.6px;line-height:12.6px;color:#e6e6e6;letter-spacing:-0.200px;">14</div><div class="a" style="left:0px;top:328px;width:25px;height:1px;background:#3a3a3a;"></div><div class="a" style="left:-187.5px;width:400px;text-align:center;top:335.63px;font-size:12.6px;line-height:12.6px;color:#e6e6e6;letter-spacing:-0.200px;">15</div><div class="a" style="left:0px;top:351px;width:25px;height:1px;background:#3a3a3a;"></div><div class="a" style="left:-187.5px;width:400px;text-align:center;top:358.63px;font-size:12.6px;line-height:12.6px;color:#e6e6e6;letter-spacing:-0.200px;">16</div><div class="a" style="left:0px;top:374px;width:25px;height:1px;background:#3a3a3a;"></div><div class="a" style="left:-187.5px;width:400px;text-align:center;top:381.63px;font-size:12.6px;line-height:12.6px;color:#e6e6e6;letter-spacing:-0.200px;">17</div><div class="a" style="left:0px;top:397px;width:25px;height:1px;background:#3a3a3a;"></div><div class="a" style="left:-187.5px;width:400px;text-align:center;top:404.63px;font-size:12.6px;line-height:12.6px;color:#e6e6e6;letter-spacing:-0.200px;">18</div><div class="a" style="left:0px;top:420px;width:25px;height:1px;background:#3a3a3a;"></div><div class="a" style="left:-187.5px;width:400px;text-align:center;top:427.63px;font-size:12.6px;line-height:12.6px;color:#e6e6e6;letter-spacing:-0.200px;">19</div><div class="a" style="left:0px;top:443px;width:25px;height:1px;background:#3a3a3a;"></div><div class="a" style="left:-187.5px;width:400px;text-align:center;top:450.63px;font-size:12.6px;line-height:12.6px;color:#e6e6e6;letter-spacing:-0.200px;">20</div><div class="a" style="left:0px;top:466px;width:25px;height:1px;background:#3a3a3a;"></div><div class="a" style="left:-187.5px;width:400px;text-align:center;top:473.63px;font-size:12.6px;line-height:12.6px;color:#e6e6e6;letter-spacing:-0.200px;">21</div><div class="a" style="left:0px;top:489px;width:25px;height:1px;background:#3a3a3a;"></div><div class="a" style="left:-187.5px;width:400px;text-align:center;top:496.63px;font-size:12.6px;line-height:12.6px;color:#e6e6e6;letter-spacing:-0.200px;">22</div><div class="a" style="left:0px;top:512px;width:25px;height:1px;background:#3a3a3a;"></div><div class="a" style="left:-187.5px;width:400px;text-align:center;top:519.63px;font-size:12.6px;line-height:12.6px;color:#e6e6e6;letter-spacing:-0.200px;">23</div><div class="a" style="left:0px;top:535px;width:25px;height:1px;background:#3a3a3a;"></div><div class="a" style="left:-187.5px;width:400px;text-align:center;top:542.63px;font-size:12.6px;line-height:12.6px;color:#e6e6e6;letter-spacing:-0.200px;">24</div><div class="a" style="left:0px;top:558px;width:25px;height:1px;background:#3a3a3a;"></div><div class="a" style="left:-187.5px;width:400px;text-align:center;top:565.63px;font-size:12.6px;line-height:12.6px;color:#e6e6e6;letter-spacing:-0.200px;">25</div><div class="a" style="left:0px;top:581px;width:25px;height:1px;background:#3a3a3a;"></div><div class="a" style="left:-187.5px;width:400px;text-align:center;top:588.63px;font-size:12.6px;line-height:12.6px;color:#e6e6e6;letter-spacing:-0.200px;">26</div><div class="a" style="left:0px;top:604px;width:25px;height:1px;background:#3a3a3a;"></div><div class="a" style="left:-187.5px;width:400px;text-align:center;top:611.63px;font-size:12.6px;line-height:12.6px;color:#e6e6e6;letter-spacing:-0.200px;">27</div><div class="a" style="left:0px;top:627px;width:25px;height:1px;background:#3a3a3a;"></div><div class="a" style="left:-187.5px;width:400px;text-align:center;top:634.63px;font-size:12.6px;line-height:12.6px;color:#e6e6e6;letter-spacing:-0.200px;">28</div><div class="a" style="left:0px;top:650px;width:25px;height:1px;background:#3a3a3a;"></div><div class="a" style="left:-187.5px;width:400px;text-align:center;top:657.63px;font-size:12.6px;line-height:12.6px;color:#e6e6e6;letter-spacing:-0.200px;">29</div><div class="a" style="left:0px;top:673px;width:25px;height:1px;background:#3a3a3a;"></div><div class="a" style="left:-187.5px;width:400px;text-align:center;top:680.63px;font-size:12.6px;line-height:12.6px;color:#e6e6e6;letter-spacing:-0.200px;">30</div><div class="a" style="left:0px;top:696px;width:25px;height:1px;background:#3a3a3a;"></div><div class="a" style="left:-187.5px;width:400px;text-align:center;top:703.63px;font-size:12.6px;line-height:12.6px;color:#e6e6e6;letter-spacing:-0.200px;">31</div><div class="a" style="left:0px;top:719px;width:25px;height:1px;background:#3a3a3a;"></div><div class="a" style="left:-187.5px;width:400px;text-align:center;top:726.63px;font-size:12.6px;line-height:12.6px;color:#e6e6e6;letter-spacing:-0.200px;">32</div><div class="a" style="left:0px;top:742px;width:25px;height:1px;background:#3a3a3a;"></div><div class="a" style="left:-187.5px;width:400px;text-align:center;top:749.63px;font-size:12.6px;line-height:12.6px;color:#e6e6e6;letter-spacing:-0.200px;">33</div><div class="a" style="left:0px;top:765px;width:25px;height:1px;background:#3a3a3a;"></div><div class="a" style="left:-187.5px;width:400px;text-align:center;top:772.63px;font-size:12.6px;line-height:12.6px;color:#e6e6e6;letter-spacing:-0.200px;">34</div><div class="a" style="left:0px;top:788px;width:25px;height:1px;background:#3a3a3a;"></div><div class="a" style="left:-187.5px;width:400px;text-align:center;top:795.63px;font-size:12.6px;line-height:12.6px;color:#e6e6e6;letter-spacing:-0.200px;">35</div><div class="a" style="left:0px;top:811px;width:25px;height:1px;background:#3a3a3a;"></div><div class="a" style="left:-187.5px;width:400px;text-align:center;top:817.13px;font-size:12.6px;line-height:12.6px;color:#e6e6e6;letter-spacing:-0.200px;">36</div><div class="a" style="left:0px;top:831px;width:25px;height:1px;background:#3a3a3a;"></div><div class="a" style="left:-187.5px;width:400px;text-align:center;top:837.13px;font-size:12.6px;line-height:12.6px;color:#e6e6e6;letter-spacing:-0.200px;">37</div><div class="a" style="left:0px;top:19px;width:25px;height:1px;background:#3a3a3a;"></div></div><div class="a" style="left:1898px;top:135px;width:22px;height:842px;background:#151515;"></div><div class="a" style="left:1898px;top:135px;width:5px;height:842px;background:#0f0f0f;"></div><svg style="position:absolute;left:1904px;top:139px" width="11" height="8" viewBox="0 0 11 8" ><path d="M1 7 L5.5 1.5 L10 7Z" fill="#9a9a9a"/></svg><div class="a" style="left:1905px;top:152px;width:9px;height:677px;background:#9b9b9b;border-radius:5px"></div><svg style="position:absolute;left:1904px;top:966px" width="11" height="8" viewBox="0 0 11 8" ><path d="M1 1 L5.5 6.5 L10 1Z" fill="#9a9a9a"/></svg><div class="a" style="left:1213px;top:977px;width:707px;height:32px;background:#121212;"></div><svg style="position:absolute;left:1240px;top:987px" width="8" height="13" viewBox="0 0 8 13" ><path d="M6.5 1 L1.5 6.5 L6.5 12" fill="none" stroke="#bdbdbd" stroke-width="1.2"/></svg><svg style="position:absolute;left:1273px;top:987px" width="8" height="13" viewBox="0 0 8 13" ><path d="M1.5 1 L6.5 6.5 L1.5 12" fill="none" stroke="#bdbdbd" stroke-width="1.2"/></svg><div class="a" style="left:1329px;top:981px;width:62px;height:24px;background:#f7b500;border-radius:4px"></div><div class="a" style="left:1160px;width:400px;text-align:center;top:986.99px;font-size:13.6px;line-height:13.6px;color:#1a1400;transform:scaleX(0.9419);transform-origin:center center;">PPH 25</div><div class="a" style="left:1395px;top:985px;width:1px;height:16px;background:#5a5a5a;"></div><div class="a" style="left:1400px;top:981px;width:43px;height:24px;background:#f7b500;border-radius:4px"></div><div class="a" style="left:1221.5px;width:400px;text-align:center;top:986.99px;font-size:13.6px;line-height:13.6px;color:#1a1400;transform:scaleX(0.9500);transform-origin:center center;">PPN</div><div class="a" style="left:1447px;top:985px;width:1px;height:16px;background:#5a5a5a;"></div><div class="a" style="left:1452px;top:977px;width:80px;height:28px;background:#fbfbfb;border-radius:0 0 4px 4px"></div><div class="a" style="left:1291.5px;width:400px;text-align:center;top:983.49px;font-size:13.6px;line-height:13.6px;color:#1a1a1a;transform:scaleX(0.9433);transform-origin:center center;">PPH 21 FX</div><div class="a" style="left:1460px;top:998px;width:63px;height:2px;background:#1e7a46;"></div><div class="a" style="left:1535px;top:985px;width:1px;height:16px;background:#5a5a5a;"></div><div class="a" style="left:1402px;width:400px;text-align:center;top:986.99px;font-size:13.6px;line-height:13.6px;color:#f0f0f0;transform:scaleX(0.9845);transform-origin:center center;">BP21-Non Kartap</div><div class="a" style="left:1669px;top:985px;width:1px;height:16px;background:#5a5a5a;"></div><div class="a" style="left:1521px;width:400px;text-align:center;top:986.99px;font-size:13.6px;line-height:13.6px;color:#f0f0f0;transform:scaleX(0.9808);transform-origin:center center;">BP21-Kartap</div><svg style="position:absolute;left:1776px;top:989px" width="13" height="4" viewBox="0 0 13 4" ><circle cx="2" cy="2" r="1.5" fill="#e0e0e0"/><circle cx="6.5" cy="2" r="1.5" fill="#e0e0e0"/><circle cx="11" cy="2" r="1.5" fill="#e0e0e0"/></svg><svg style="position:absolute;left:1808px;top:986px" width="14" height="14" viewBox="0 0 14 14" ><path d="M7 1 V13 M1 7 H13" stroke="#bdbdbd" stroke-width="1.1"/></svg><svg style="position:absolute;left:1845px;top:986px" width="5" height="14" viewBox="0 0 5 14" ><circle cx="2.5" cy="2.5" r="1.3" fill="#e0e0e0"/><circle cx="2.5" cy="7" r="1.3" fill="#e0e0e0"/><circle cx="2.5" cy="11.5" r="1.3" fill="#e0e0e0"/></svg><svg style="position:absolute;left:1868px;top:986px" width="30" height="14" viewBox="0 0 30 14" ><path d="M7 2 L1 7 L7 12Z" fill="#cfcfcf"/><rect x="12.5" y="2.5" width="3" height="9" fill="#cfcfcf"/><path d="M22 2 L28 7 L22 12Z" fill="#cfcfcf"/></svg><div class="a" style="left:0px;top:1008px;width:1920px;height:24px;background:#1c1c1c;"></div><div class="a" style="left:14px;top:1015.04px;font-size:12px;line-height:12px;color:#d0d0d0;transform:scaleX(0.9679);transform-origin:left center;">38 items</div><div class="a" style="left:68px;top:1014px;width:1px;height:12px;background:#bdbdbd;"></div><div class="a" style="left:79px;top:1015.04px;font-size:12px;line-height:12px;color:#d0d0d0;transform:scaleX(0.9572);transform-origin:left center;">1 item selected&nbsp; 3,98 MB</div><div class="a" style="left:216px;top:1014px;width:1px;height:12px;background:#bdbdbd;"></div><div class="a" style="left:1872px;top:1010px;width:22px;height:20px;background:#3a3a3a;border-radius:3px"></div><svg style="position:absolute;left:1875px;top:1013px" width="16" height="14" viewBox="0 0 16 14" ><rect x="0.5" y="0.5" width="15" height="13" fill="none" stroke="#e0e0e0"/><path d="M3 3.5 H13 M3 6 H13 M3 8.5 H13 M3 11 H13" stroke="#e0e0e0"/></svg><svg style="position:absolute;left:1897px;top:1013px" width="16" height="14" viewBox="0 0 16 14" ><rect x="0.5" y="0.5" width="15" height="13" fill="none" stroke="#e0e0e0"/><rect x="2.5" y="2.5" width="11" height="8" fill="#e0e0e0"/></svg><div class="a" style="left:0px;top:1032px;width:1920px;height:48px;background:linear-gradient(90deg,#1e1b19 0%,#211c19 25%,#2a211c 50%,#251e1a 62%,#1f1f20 78%,#1d2124 88%,#262220 94%,#2b231b 100%);"></div><div class="a" style="left:0px;top:1032px;width:1920px;height:1px;background:#3b3835;"></div><svg style="position:absolute;left:18px;top:1043px" width="26" height="25" viewBox="0 0 26 25" ><circle cx="12" cy="13" r="10.5" fill="#e9d9a8"/><path d="M8 10 L12 8 L16 10 L15 15 L9 15Z" fill="#5b5b5b"/><circle cx="4.5" cy="17" r="3" fill="#cdb885"/><circle cx="19" cy="18" r="3" fill="#cdb885"/></svg><svg style="position:absolute;left:31px;top:1038px" width="16" height="16" viewBox="0 0 16 16" ><circle cx="8" cy="8" r="7.5" fill="#f39aa6"/><path d="M8.8 3.8 V12 M6.8 5.5 L8.8 3.8" stroke="#3a1a1a" stroke-width="1.1" fill="none"/></svg><div class="a" style="left:50px;top:1041.67px;font-size:12.2px;line-height:12.2px;color:#ffffff;transform:scaleX(0.9091);transform-origin:left center;text-shadow:0.35px 0 0 #fff">KOE - WOB</div><div class="a" style="left:50px;top:1057.67px;font-size:12.2px;line-height:12.2px;color:#d8d8d8;transform:scaleX(0.9744);transform-origin:left center;">Skor pertanding...</div><svg style="position:absolute;left:639px;top:1045px" width="24" height="24" viewBox="0 0 24 24" ><defs><linearGradient id="sg" x1="0" y1="0" x2="1" y2="1"><stop offset="0" stop-color="#5ad6fb"/><stop offset="1" stop-color="#1389e6"/></linearGradient></defs><rect x="0" y="0" width="11.3" height="11.3" rx="0.8" fill="url(#sg)"/><rect x="12.7" y="0" width="11.3" height="11.3" rx="0.8" fill="url(#sg)"/><rect x="0" y="12.7" width="11.3" height="11.3" rx="0.8" fill="url(#sg)"/><rect x="12.7" y="12.7" width="11.3" height="11.3" rx="0.8" fill="url(#sg)"/></svg><div class="a" style="left:675px;top:1040px;width:219px;height:32px;background:linear-gradient(90deg,#4a403a 0%,#4b4039 60%,#4d423a 100%);border-radius:16px;box-shadow:inset 0 0 0 1px rgba(255,255,255,0.06)"></div><svg style="position:absolute;left:686px;top:1048px" width="16" height="17" viewBox="0 0 16 17" ><circle cx="6.8" cy="6.8" r="5.6" fill="#6a6a6a" stroke="#eaeaea" stroke-width="1.6"/><path d="M11 11 L15 15.5" stroke="#eaeaea" stroke-width="1.8" stroke-linecap="round"/></svg><div class="a" style="left:712px;top:1049.15px;font-size:14px;line-height:14px;color:#e6e6e6;transform:scaleX(0.9721);transform-origin:left center;">Search</div><svg style="position:absolute;left:845px;top:1041px" width="46" height="30" viewBox="0 0 46 30" ><ellipse cx="23" cy="25" rx="21" ry="3.2" fill="#dcc7a2"/><path d="M4 3 L8 1.5 L12 4 L14 9 L31 9 Q35 9.5 35 13 L35 19 L33 19 L32 25 L30 25 L30 19 L16 19 L15 25 L13 25 L12 17 Q10 13 7 9 L3.5 9.5 Q2 8 3 6Z" fill="#e6e2ee"/><path d="M6 2.5 L8.5 8 M9 3 L11.5 9 M13 7 L15 13 M16.5 9 L18 16 M20 9 L21 17 M23.5 9 L24 18 M27 9 L27 18 M30.5 9.5 L30 18 M33.5 11 L33 18" stroke="#3b3163" stroke-width="1.4"/></svg><svg style="position:absolute;left:907px;top:1045px" width="25" height="22" viewBox="0 0 25 22" ><rect x="0.5" y="6.5" width="15" height="14" rx="1.2" fill="#6e6e6e"/><rect x="6.5" y="0.5" width="18" height="15" rx="1.2" fill="#f2f2f2"/><rect x="6.5" y="6.5" width="9" height="9" fill="#a9a9a9"/></svg><div class="a" style="left:944px;top:1036px;width:38px;height:40px;background:rgba(255,255,255,0.07);border-radius:5px;box-shadow:inset 0 0 0 1px rgba(255,255,255,0.04)"></div><svg style="position:absolute;left:951px;top:1045px" width="24" height="23" viewBox="0 0 24 23" ><path d="M0.5 2 Q0.5 0.5 2 0.5 H9 L11 2.5 H22 Q23.5 2.5 23.5 4 V20 Q23.5 22.5 21 22.5 H3 Q0.5 22.5 0.5 20Z" fill="#e7a92b"/><path d="M0.5 6 H23.5 V20 Q23.5 22.5 21 22.5 H3 Q0.5 22.5 0.5 20Z" fill="#fbd45a"/><path d="M6 14 Q6 13 7 13 H17 Q18 13 18 14 V22.5 H6Z" fill="#1b74d1"/><rect x="6" y="13" width="12" height="3" fill="#2196f3"/></svg><div class="a" style="left:956px;top:1072px;width:15px;height:3px;background:#5fc8ff;border-radius:2px"></div><svg style="position:absolute;left:994px;top:1043px" width="26" height="26" viewBox="0 0 26 26" ><defs><linearGradient id="te1" x1="0" y1="0" x2="1" y2="0.35"><stop offset="0" stop-color="#2fb6f0"/><stop offset="0.55" stop-color="#3fd0c0"/><stop offset="1" stop-color="#6ad85a"/></linearGradient><linearGradient id="te2" x1="0" y1="0" x2="0.3" y2="1"><stop offset="0" stop-color="#2a9be8"/><stop offset="1" stop-color="#0c4f9c"/></linearGradient></defs><circle cx="13" cy="13" r="12" fill="url(#te2)"/><path d="M1.5 12 Q3 1.5 13 1 Q23 1 25 11 Q25.5 17.5 20 19 Q15 20 12.5 17 Q10.5 14.5 12.5 12.5 Q7 9 1.5 12Z" fill="url(#te1)"/><circle cx="11.8" cy="13.5" r="2.8" fill="#0b2a4a"/></svg><svg style="position:absolute;left:1038px;top:1044px" width="26" height="25" viewBox="0 0 26 25" ><path d="M8.5 6 V3 Q8.5 1.3 10.3 1.3 H15.7 Q17.5 1.3 17.5 3 V6" fill="none" stroke="#45b8e6" stroke-width="1.8"/><rect x="1" y="5" width="24" height="19" rx="2.5" fill="#f2f2f2"/><rect x="8" y="10.5" width="4.4" height="4.4" fill="#e94b2d"/><rect x="13.4" y="10.5" width="4.4" height="4.4" fill="#6cb52d"/><rect x="8" y="15.9" width="4.4" height="4.4" fill="#1b8be8"/><rect x="13.4" y="15.9" width="4.4" height="4.4" fill="#f2b21b"/></svg><svg style="position:absolute;left:1082px;top:1043px" width="26" height="26" viewBox="0 0 26 26" ><path d="M13 1.5 A11.3 11.3 0 1 1 7 22.6 L2 24 L3.5 19.3 A11.3 11.3 0 0 1 13 1.5Z" fill="none" stroke="#25d366" stroke-width="2.2"/><path d="M8.5 8 Q9.5 6.5 10.5 7.5 L11.8 10 Q12 10.8 11.2 11.5 Q12.5 14.3 15.2 15.6 Q16 14.8 16.8 15 L19 16.3 Q19.8 17.2 18.6 18.4 Q16.5 20 12.5 17.5 Q8.5 14.8 8 11 Q7.8 9 8.5 8Z" fill="#25d366"/></svg><svg style="position:absolute;left:1127px;top:1043px" width="25" height="25" viewBox="0 0 25 25" ><circle cx="12.5" cy="12.5" r="12" fill="#db4437"/><path d="M12.5 12.5 L2.1 18.5 A12 12 0 0 0 12.5 24.5 Z" fill="#0f9d58"/><path d="M12.5 12.5 L1.1 8.5 A12 12 0 0 0 2.1 18.5Z" fill="#0f9d58"/><path d="M12.5 12.5 L22.9 18.5 A12 12 0 0 1 12.5 24.5 L17 15Z" fill="#ffcd40"/><path d="M12.5 12.5 L23.9 8.5 A12 12 0 0 1 22.9 18.5Z" fill="#ffcd40"/><circle cx="12.5" cy="12.5" r="5.6" fill="#ffffff"/><circle cx="12.5" cy="12.5" r="4.4" fill="#4285f4"/></svg><div class="a" style="left:1135px;top:1073px;width:8px;height:3px;background:#9a9a9a;border-radius:2px"></div><svg style="position:absolute;left:1171px;top:1043px" width="25" height="25" viewBox="0 0 25 25" ><circle cx="12.5" cy="12.5" r="12" fill="#e2435a"/><path d="M6.5 19 L12.5 5 L18.5 19 L16 19 L12.5 10.5 L9 19Z" fill="#ffffff"/></svg><svg style="position:absolute;left:1215px;top:1044px" width="25" height="25" viewBox="0 0 25 25" ><rect x="0" y="0" width="24" height="24" fill="#ef443b"/><path d="M4 12 L9 7 L14 12 L9 17Z" fill="#ffffff"/><path d="M13 7.5 L17.5 12 L13 16.5 L14.5 18 L20.5 12 L14.5 6Z" fill="#ffffff"/></svg><svg style="position:absolute;left:1258px;top:1044px" width="25" height="25" viewBox="0 0 25 25" ><rect x="6" y="0.5" width="18" height="23" rx="2" fill="#21a366"/><rect x="6" y="0.5" width="18" height="8" rx="2" fill="#33c481"/><rect x="15" y="8" width="9" height="8" fill="#107c41"/><rect x="6" y="16" width="18" height="7.5" rx="2" fill="#185c37"/><rect x="0.5" y="10" width="12" height="12" rx="1.5" fill="#107c41"/><path d="M3.5 13 L9.5 19 M9.5 13 L3.5 19" stroke="#fff" stroke-width="1.6"/></svg><div class="a" style="left:1266px;top:1073px;width:8px;height:3px;background:#9a9a9a;border-radius:2px"></div><svg style="position:absolute;left:1695px;top:1052px" width="13" height="8" viewBox="0 0 13 8" ><path d="M1 7 L6.5 1.5 L12 7" fill="none" stroke="#f0f0f0" stroke-width="1.4"/></svg><svg style="position:absolute;left:1725px;top:1048px" width="18" height="16" viewBox="0 0 18 16" ><path d="M4 14 Q0.5 14 0.5 10.5 Q0.5 7.5 3.5 7 Q4.5 3 8.5 3 Q12.5 3 13.5 6.5 Q17 7 17 10.5 Q17 14 13.5 14Z" fill="#8c8c8c"/><path d="M2 1 L16 15.5" stroke="#1d2124" stroke-width="2.2"/><path d="M2 1 L16 15.5" stroke="#bdbdbd" stroke-width="1"/></svg><svg style="position:absolute;left:1757px;top:1047px" width="18" height="18" viewBox="0 0 18 18" ><rect x="0.6" y="1.6" width="12" height="10" fill="none" stroke="#f0f0f0" stroke-width="1.1"/><path d="M6.6 11.6 V14.5 M3 14.8 H10" stroke="#f0f0f0" stroke-width="1.1"/><rect x="13.2" y="0.6" width="3.6" height="5" rx="0.8" fill="none" stroke="#f0f0f0" stroke-width="1"/><path d="M15 5.6 V16.5" stroke="#f0f0f0" stroke-width="1.1"/></svg><svg style="position:absolute;left:1782px;top:1048px" width="17" height="16" viewBox="0 0 17 16" ><path d="M1 5.5 H4 L8 1.5 V14.5 L4 10.5 H1Z" fill="none" stroke="#f0f0f0" stroke-width="1.1" stroke-linejoin="round"/><path d="M10.5 5.5 Q12 8 10.5 10.5 M12.5 3.5 Q15.2 8 12.5 12.5 M14.5 1.5 Q18.5 8 14.5 14.5" fill="none" stroke="#f0f0f0" stroke-width="1.1"/></svg><div class="a" style="right:42.5px;top:1042.18px;font-size:11.6px;line-height:11.6px;color:#f4f4f4;text-align:right;letter-spacing:0.300px;">09:32</div><div class="a" style="right:42.5px;top:1057.78px;font-size:11.6px;line-height:11.6px;color:#f4f4f4;text-align:right;letter-spacing:0.300px;">31/01/2026</div><svg style="position:absolute;left:1884px;top:1048px" width="16" height="17" viewBox="0 0 16 17" ><path d="M8 1.5 Q13 1.5 13.3 7 V11 L15 13.5 H1 L2.7 11 V7 Q3 1.5 8 1.5Z" fill="#8fd8ff"/><path d="M6 14.5 Q8 16.8 10 14.5Z" fill="#8fd8ff"/></svg></body></html>
